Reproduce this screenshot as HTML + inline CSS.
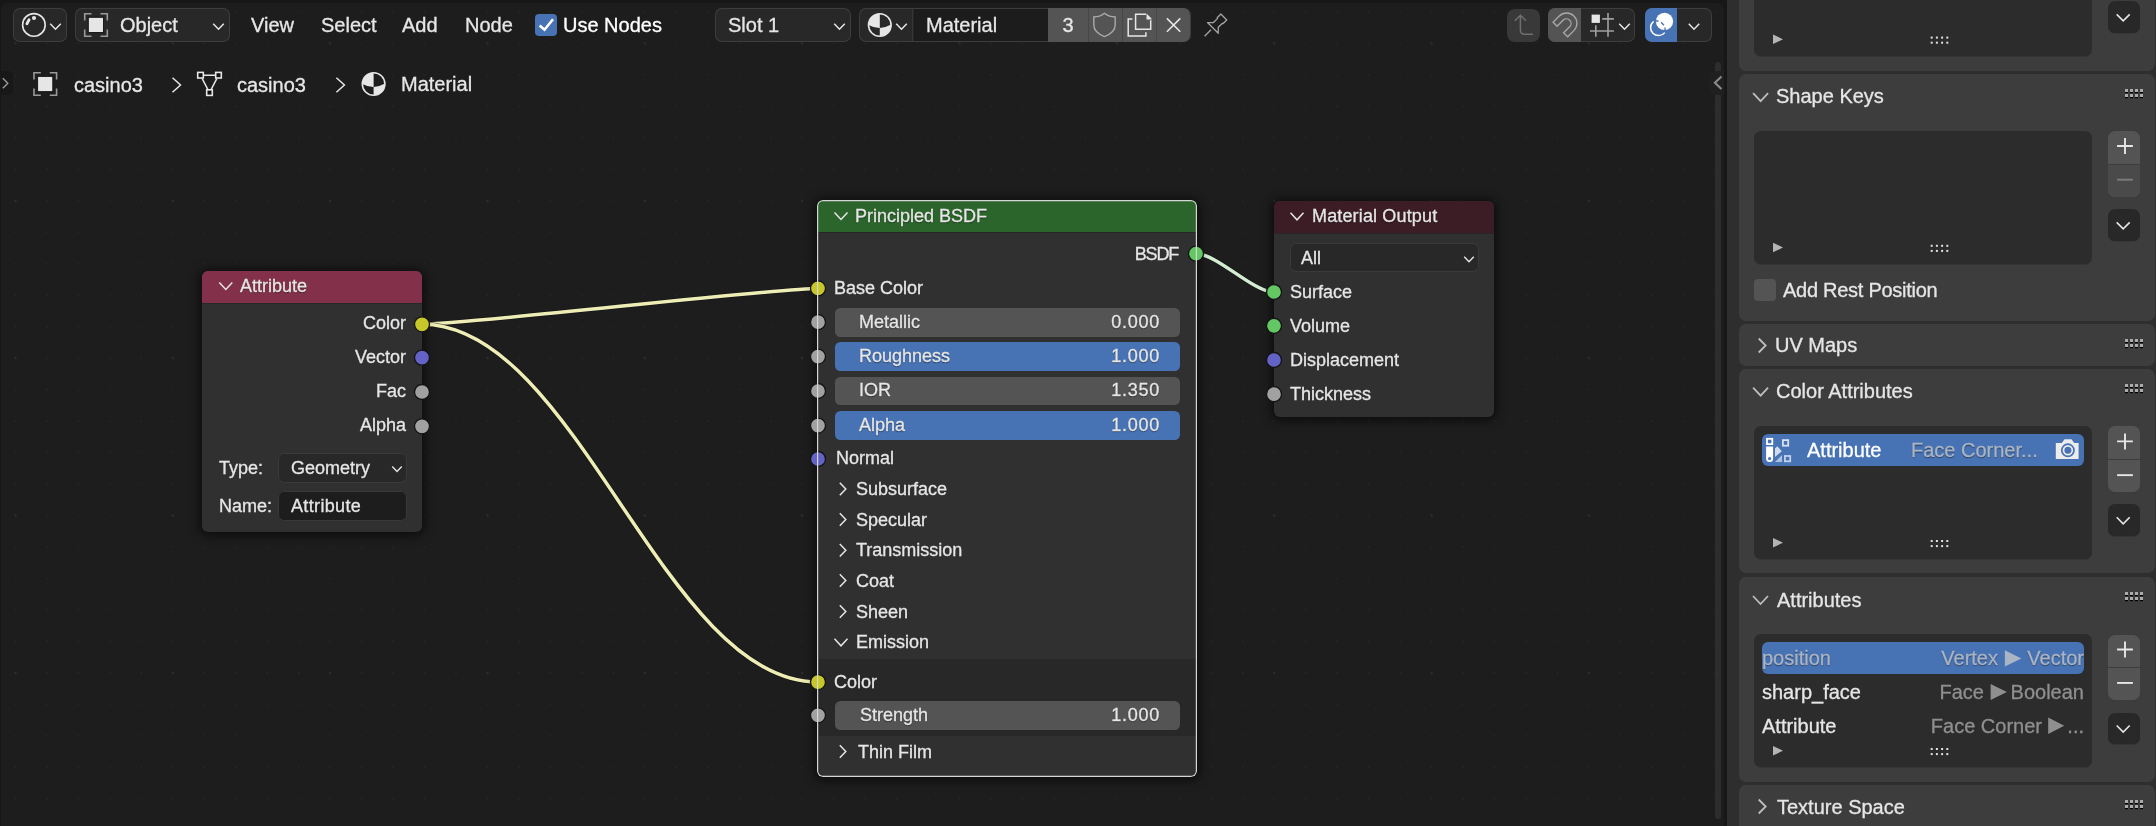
<!DOCTYPE html>
<html><head><meta charset="utf-8"><style>
html,body{margin:0;padding:0;}
body{width:2156px;height:826px;overflow:hidden;position:relative;background:#171717;font-family:"Liberation Sans",sans-serif;}
div{position:absolute;box-sizing:border-box;}
.t{white-space:nowrap;will-change:transform;-webkit-text-stroke:0.3px currentColor;}
svg{position:absolute;left:0;top:0;}
</style></head><body>
<div style="left:0px;top:0px;width:2156px;height:826px;background:#171717;"></div>
<div style="left:1px;top:3px;width:1723px;height:830px;background:#1d1d1d;border-radius:7px 7px 0 0;"></div>
<div style="left:1727px;top:0px;width:1428px;height:826px;background:#2e2e2e;"></div>
<svg width="2156" height="826" viewBox="0 0 2156 826" style="z-index:0"><path d="M14.65 11.2h1.6v1.6h-1.6zM14.65 74.14h1.6v1.6h-1.6zM14.65 105.61h1.6v1.6h-1.6zM14.65 137.08h1.6v1.6h-1.6zM14.65 168.55h1.6v1.6h-1.6zM14.65 231.49h1.6v1.6h-1.6zM14.65 262.96h1.6v1.6h-1.6zM14.65 294.43h1.6v1.6h-1.6zM14.65 325.9h1.6v1.6h-1.6zM14.65 388.84h1.6v1.6h-1.6zM14.65 420.31h1.6v1.6h-1.6zM14.65 451.78h1.6v1.6h-1.6zM14.65 483.25h1.6v1.6h-1.6zM14.65 546.19h1.6v1.6h-1.6zM14.65 577.66h1.6v1.6h-1.6zM14.65 609.13h1.6v1.6h-1.6zM14.65 640.6h1.6v1.6h-1.6zM14.65 703.54h1.6v1.6h-1.6zM14.65 735.01h1.6v1.6h-1.6zM14.65 766.48h1.6v1.6h-1.6zM14.65 797.95h1.6v1.6h-1.6zM46.12 11.2h1.6v1.6h-1.6zM46.12 42.67h1.6v1.6h-1.6zM46.12 74.14h1.6v1.6h-1.6zM46.12 105.61h1.6v1.6h-1.6zM46.12 137.08h1.6v1.6h-1.6zM46.12 168.55h1.6v1.6h-1.6zM46.12 200.02h1.6v1.6h-1.6zM46.12 231.49h1.6v1.6h-1.6zM46.12 262.96h1.6v1.6h-1.6zM46.12 294.43h1.6v1.6h-1.6zM46.12 325.9h1.6v1.6h-1.6zM46.12 357.37h1.6v1.6h-1.6zM46.12 388.84h1.6v1.6h-1.6zM46.12 420.31h1.6v1.6h-1.6zM46.12 451.78h1.6v1.6h-1.6zM46.12 483.25h1.6v1.6h-1.6zM46.12 514.72h1.6v1.6h-1.6zM46.12 546.19h1.6v1.6h-1.6zM46.12 577.66h1.6v1.6h-1.6zM46.12 609.13h1.6v1.6h-1.6zM46.12 640.6h1.6v1.6h-1.6zM46.12 672.07h1.6v1.6h-1.6zM46.12 703.54h1.6v1.6h-1.6zM46.12 735.01h1.6v1.6h-1.6zM46.12 766.48h1.6v1.6h-1.6zM46.12 797.95h1.6v1.6h-1.6zM77.59 11.2h1.6v1.6h-1.6zM77.59 42.67h1.6v1.6h-1.6zM77.59 74.14h1.6v1.6h-1.6zM77.59 105.61h1.6v1.6h-1.6zM77.59 137.08h1.6v1.6h-1.6zM77.59 168.55h1.6v1.6h-1.6zM77.59 200.02h1.6v1.6h-1.6zM77.59 231.49h1.6v1.6h-1.6zM77.59 262.96h1.6v1.6h-1.6zM77.59 294.43h1.6v1.6h-1.6zM77.59 325.9h1.6v1.6h-1.6zM77.59 357.37h1.6v1.6h-1.6zM77.59 388.84h1.6v1.6h-1.6zM77.59 420.31h1.6v1.6h-1.6zM77.59 451.78h1.6v1.6h-1.6zM77.59 483.25h1.6v1.6h-1.6zM77.59 514.72h1.6v1.6h-1.6zM77.59 546.19h1.6v1.6h-1.6zM77.59 577.66h1.6v1.6h-1.6zM77.59 609.13h1.6v1.6h-1.6zM77.59 640.6h1.6v1.6h-1.6zM77.59 672.07h1.6v1.6h-1.6zM77.59 703.54h1.6v1.6h-1.6zM77.59 735.01h1.6v1.6h-1.6zM77.59 766.48h1.6v1.6h-1.6zM77.59 797.95h1.6v1.6h-1.6zM109.06 11.2h1.6v1.6h-1.6zM109.06 42.67h1.6v1.6h-1.6zM109.06 74.14h1.6v1.6h-1.6zM109.06 105.61h1.6v1.6h-1.6zM109.06 137.08h1.6v1.6h-1.6zM109.06 168.55h1.6v1.6h-1.6zM109.06 200.02h1.6v1.6h-1.6zM109.06 231.49h1.6v1.6h-1.6zM109.06 262.96h1.6v1.6h-1.6zM109.06 294.43h1.6v1.6h-1.6zM109.06 325.9h1.6v1.6h-1.6zM109.06 357.37h1.6v1.6h-1.6zM109.06 388.84h1.6v1.6h-1.6zM109.06 420.31h1.6v1.6h-1.6zM109.06 451.78h1.6v1.6h-1.6zM109.06 483.25h1.6v1.6h-1.6zM109.06 514.72h1.6v1.6h-1.6zM109.06 546.19h1.6v1.6h-1.6zM109.06 577.66h1.6v1.6h-1.6zM109.06 609.13h1.6v1.6h-1.6zM109.06 640.6h1.6v1.6h-1.6zM109.06 672.07h1.6v1.6h-1.6zM109.06 703.54h1.6v1.6h-1.6zM109.06 735.01h1.6v1.6h-1.6zM109.06 766.48h1.6v1.6h-1.6zM109.06 797.95h1.6v1.6h-1.6zM140.53 11.2h1.6v1.6h-1.6zM140.53 42.67h1.6v1.6h-1.6zM140.53 74.14h1.6v1.6h-1.6zM140.53 105.61h1.6v1.6h-1.6zM140.53 137.08h1.6v1.6h-1.6zM140.53 168.55h1.6v1.6h-1.6zM140.53 200.02h1.6v1.6h-1.6zM140.53 231.49h1.6v1.6h-1.6zM140.53 262.96h1.6v1.6h-1.6zM140.53 294.43h1.6v1.6h-1.6zM140.53 325.9h1.6v1.6h-1.6zM140.53 357.37h1.6v1.6h-1.6zM140.53 388.84h1.6v1.6h-1.6zM140.53 420.31h1.6v1.6h-1.6zM140.53 451.78h1.6v1.6h-1.6zM140.53 483.25h1.6v1.6h-1.6zM140.53 514.72h1.6v1.6h-1.6zM140.53 546.19h1.6v1.6h-1.6zM140.53 577.66h1.6v1.6h-1.6zM140.53 609.13h1.6v1.6h-1.6zM140.53 640.6h1.6v1.6h-1.6zM140.53 672.07h1.6v1.6h-1.6zM140.53 703.54h1.6v1.6h-1.6zM140.53 735.01h1.6v1.6h-1.6zM140.53 766.48h1.6v1.6h-1.6zM140.53 797.95h1.6v1.6h-1.6zM172 11.2h1.6v1.6h-1.6zM172 74.14h1.6v1.6h-1.6zM172 105.61h1.6v1.6h-1.6zM172 137.08h1.6v1.6h-1.6zM172 168.55h1.6v1.6h-1.6zM172 231.49h1.6v1.6h-1.6zM172 262.96h1.6v1.6h-1.6zM172 294.43h1.6v1.6h-1.6zM172 325.9h1.6v1.6h-1.6zM172 388.84h1.6v1.6h-1.6zM172 420.31h1.6v1.6h-1.6zM172 451.78h1.6v1.6h-1.6zM172 483.25h1.6v1.6h-1.6zM172 546.19h1.6v1.6h-1.6zM172 577.66h1.6v1.6h-1.6zM172 609.13h1.6v1.6h-1.6zM172 640.6h1.6v1.6h-1.6zM172 703.54h1.6v1.6h-1.6zM172 735.01h1.6v1.6h-1.6zM172 766.48h1.6v1.6h-1.6zM172 797.95h1.6v1.6h-1.6zM203.47 11.2h1.6v1.6h-1.6zM203.47 42.67h1.6v1.6h-1.6zM203.47 74.14h1.6v1.6h-1.6zM203.47 105.61h1.6v1.6h-1.6zM203.47 137.08h1.6v1.6h-1.6zM203.47 168.55h1.6v1.6h-1.6zM203.47 200.02h1.6v1.6h-1.6zM203.47 231.49h1.6v1.6h-1.6zM203.47 262.96h1.6v1.6h-1.6zM203.47 294.43h1.6v1.6h-1.6zM203.47 325.9h1.6v1.6h-1.6zM203.47 357.37h1.6v1.6h-1.6zM203.47 388.84h1.6v1.6h-1.6zM203.47 420.31h1.6v1.6h-1.6zM203.47 451.78h1.6v1.6h-1.6zM203.47 483.25h1.6v1.6h-1.6zM203.47 514.72h1.6v1.6h-1.6zM203.47 546.19h1.6v1.6h-1.6zM203.47 577.66h1.6v1.6h-1.6zM203.47 609.13h1.6v1.6h-1.6zM203.47 640.6h1.6v1.6h-1.6zM203.47 672.07h1.6v1.6h-1.6zM203.47 703.54h1.6v1.6h-1.6zM203.47 735.01h1.6v1.6h-1.6zM203.47 766.48h1.6v1.6h-1.6zM203.47 797.95h1.6v1.6h-1.6zM234.94 11.2h1.6v1.6h-1.6zM234.94 42.67h1.6v1.6h-1.6zM234.94 74.14h1.6v1.6h-1.6zM234.94 105.61h1.6v1.6h-1.6zM234.94 137.08h1.6v1.6h-1.6zM234.94 168.55h1.6v1.6h-1.6zM234.94 200.02h1.6v1.6h-1.6zM234.94 231.49h1.6v1.6h-1.6zM234.94 262.96h1.6v1.6h-1.6zM234.94 294.43h1.6v1.6h-1.6zM234.94 325.9h1.6v1.6h-1.6zM234.94 357.37h1.6v1.6h-1.6zM234.94 388.84h1.6v1.6h-1.6zM234.94 420.31h1.6v1.6h-1.6zM234.94 451.78h1.6v1.6h-1.6zM234.94 483.25h1.6v1.6h-1.6zM234.94 514.72h1.6v1.6h-1.6zM234.94 546.19h1.6v1.6h-1.6zM234.94 577.66h1.6v1.6h-1.6zM234.94 609.13h1.6v1.6h-1.6zM234.94 640.6h1.6v1.6h-1.6zM234.94 672.07h1.6v1.6h-1.6zM234.94 703.54h1.6v1.6h-1.6zM234.94 735.01h1.6v1.6h-1.6zM234.94 766.48h1.6v1.6h-1.6zM234.94 797.95h1.6v1.6h-1.6zM266.41 11.2h1.6v1.6h-1.6zM266.41 42.67h1.6v1.6h-1.6zM266.41 74.14h1.6v1.6h-1.6zM266.41 105.61h1.6v1.6h-1.6zM266.41 137.08h1.6v1.6h-1.6zM266.41 168.55h1.6v1.6h-1.6zM266.41 200.02h1.6v1.6h-1.6zM266.41 231.49h1.6v1.6h-1.6zM266.41 262.96h1.6v1.6h-1.6zM266.41 294.43h1.6v1.6h-1.6zM266.41 325.9h1.6v1.6h-1.6zM266.41 357.37h1.6v1.6h-1.6zM266.41 388.84h1.6v1.6h-1.6zM266.41 420.31h1.6v1.6h-1.6zM266.41 451.78h1.6v1.6h-1.6zM266.41 483.25h1.6v1.6h-1.6zM266.41 514.72h1.6v1.6h-1.6zM266.41 546.19h1.6v1.6h-1.6zM266.41 577.66h1.6v1.6h-1.6zM266.41 609.13h1.6v1.6h-1.6zM266.41 640.6h1.6v1.6h-1.6zM266.41 672.07h1.6v1.6h-1.6zM266.41 703.54h1.6v1.6h-1.6zM266.41 735.01h1.6v1.6h-1.6zM266.41 766.48h1.6v1.6h-1.6zM266.41 797.95h1.6v1.6h-1.6zM297.88 11.2h1.6v1.6h-1.6zM297.88 42.67h1.6v1.6h-1.6zM297.88 74.14h1.6v1.6h-1.6zM297.88 105.61h1.6v1.6h-1.6zM297.88 137.08h1.6v1.6h-1.6zM297.88 168.55h1.6v1.6h-1.6zM297.88 200.02h1.6v1.6h-1.6zM297.88 231.49h1.6v1.6h-1.6zM297.88 262.96h1.6v1.6h-1.6zM297.88 294.43h1.6v1.6h-1.6zM297.88 325.9h1.6v1.6h-1.6zM297.88 357.37h1.6v1.6h-1.6zM297.88 388.84h1.6v1.6h-1.6zM297.88 420.31h1.6v1.6h-1.6zM297.88 451.78h1.6v1.6h-1.6zM297.88 483.25h1.6v1.6h-1.6zM297.88 514.72h1.6v1.6h-1.6zM297.88 546.19h1.6v1.6h-1.6zM297.88 577.66h1.6v1.6h-1.6zM297.88 609.13h1.6v1.6h-1.6zM297.88 640.6h1.6v1.6h-1.6zM297.88 672.07h1.6v1.6h-1.6zM297.88 703.54h1.6v1.6h-1.6zM297.88 735.01h1.6v1.6h-1.6zM297.88 766.48h1.6v1.6h-1.6zM297.88 797.95h1.6v1.6h-1.6zM329.35 11.2h1.6v1.6h-1.6zM329.35 74.14h1.6v1.6h-1.6zM329.35 105.61h1.6v1.6h-1.6zM329.35 137.08h1.6v1.6h-1.6zM329.35 168.55h1.6v1.6h-1.6zM329.35 231.49h1.6v1.6h-1.6zM329.35 262.96h1.6v1.6h-1.6zM329.35 294.43h1.6v1.6h-1.6zM329.35 325.9h1.6v1.6h-1.6zM329.35 388.84h1.6v1.6h-1.6zM329.35 420.31h1.6v1.6h-1.6zM329.35 451.78h1.6v1.6h-1.6zM329.35 483.25h1.6v1.6h-1.6zM329.35 546.19h1.6v1.6h-1.6zM329.35 577.66h1.6v1.6h-1.6zM329.35 609.13h1.6v1.6h-1.6zM329.35 640.6h1.6v1.6h-1.6zM329.35 703.54h1.6v1.6h-1.6zM329.35 735.01h1.6v1.6h-1.6zM329.35 766.48h1.6v1.6h-1.6zM329.35 797.95h1.6v1.6h-1.6zM360.82 11.2h1.6v1.6h-1.6zM360.82 42.67h1.6v1.6h-1.6zM360.82 74.14h1.6v1.6h-1.6zM360.82 105.61h1.6v1.6h-1.6zM360.82 137.08h1.6v1.6h-1.6zM360.82 168.55h1.6v1.6h-1.6zM360.82 200.02h1.6v1.6h-1.6zM360.82 231.49h1.6v1.6h-1.6zM360.82 262.96h1.6v1.6h-1.6zM360.82 294.43h1.6v1.6h-1.6zM360.82 325.9h1.6v1.6h-1.6zM360.82 357.37h1.6v1.6h-1.6zM360.82 388.84h1.6v1.6h-1.6zM360.82 420.31h1.6v1.6h-1.6zM360.82 451.78h1.6v1.6h-1.6zM360.82 483.25h1.6v1.6h-1.6zM360.82 514.72h1.6v1.6h-1.6zM360.82 546.19h1.6v1.6h-1.6zM360.82 577.66h1.6v1.6h-1.6zM360.82 609.13h1.6v1.6h-1.6zM360.82 640.6h1.6v1.6h-1.6zM360.82 672.07h1.6v1.6h-1.6zM360.82 703.54h1.6v1.6h-1.6zM360.82 735.01h1.6v1.6h-1.6zM360.82 766.48h1.6v1.6h-1.6zM360.82 797.95h1.6v1.6h-1.6zM392.29 11.2h1.6v1.6h-1.6zM392.29 42.67h1.6v1.6h-1.6zM392.29 74.14h1.6v1.6h-1.6zM392.29 105.61h1.6v1.6h-1.6zM392.29 137.08h1.6v1.6h-1.6zM392.29 168.55h1.6v1.6h-1.6zM392.29 200.02h1.6v1.6h-1.6zM392.29 231.49h1.6v1.6h-1.6zM392.29 262.96h1.6v1.6h-1.6zM392.29 294.43h1.6v1.6h-1.6zM392.29 325.9h1.6v1.6h-1.6zM392.29 357.37h1.6v1.6h-1.6zM392.29 388.84h1.6v1.6h-1.6zM392.29 420.31h1.6v1.6h-1.6zM392.29 451.78h1.6v1.6h-1.6zM392.29 483.25h1.6v1.6h-1.6zM392.29 514.72h1.6v1.6h-1.6zM392.29 546.19h1.6v1.6h-1.6zM392.29 577.66h1.6v1.6h-1.6zM392.29 609.13h1.6v1.6h-1.6zM392.29 640.6h1.6v1.6h-1.6zM392.29 672.07h1.6v1.6h-1.6zM392.29 703.54h1.6v1.6h-1.6zM392.29 735.01h1.6v1.6h-1.6zM392.29 766.48h1.6v1.6h-1.6zM392.29 797.95h1.6v1.6h-1.6zM423.76 11.2h1.6v1.6h-1.6zM423.76 42.67h1.6v1.6h-1.6zM423.76 74.14h1.6v1.6h-1.6zM423.76 105.61h1.6v1.6h-1.6zM423.76 137.08h1.6v1.6h-1.6zM423.76 168.55h1.6v1.6h-1.6zM423.76 200.02h1.6v1.6h-1.6zM423.76 231.49h1.6v1.6h-1.6zM423.76 262.96h1.6v1.6h-1.6zM423.76 294.43h1.6v1.6h-1.6zM423.76 325.9h1.6v1.6h-1.6zM423.76 357.37h1.6v1.6h-1.6zM423.76 388.84h1.6v1.6h-1.6zM423.76 420.31h1.6v1.6h-1.6zM423.76 451.78h1.6v1.6h-1.6zM423.76 483.25h1.6v1.6h-1.6zM423.76 514.72h1.6v1.6h-1.6zM423.76 546.19h1.6v1.6h-1.6zM423.76 577.66h1.6v1.6h-1.6zM423.76 609.13h1.6v1.6h-1.6zM423.76 640.6h1.6v1.6h-1.6zM423.76 672.07h1.6v1.6h-1.6zM423.76 703.54h1.6v1.6h-1.6zM423.76 735.01h1.6v1.6h-1.6zM423.76 766.48h1.6v1.6h-1.6zM423.76 797.95h1.6v1.6h-1.6zM455.23 11.2h1.6v1.6h-1.6zM455.23 42.67h1.6v1.6h-1.6zM455.23 74.14h1.6v1.6h-1.6zM455.23 105.61h1.6v1.6h-1.6zM455.23 137.08h1.6v1.6h-1.6zM455.23 168.55h1.6v1.6h-1.6zM455.23 200.02h1.6v1.6h-1.6zM455.23 231.49h1.6v1.6h-1.6zM455.23 262.96h1.6v1.6h-1.6zM455.23 294.43h1.6v1.6h-1.6zM455.23 325.9h1.6v1.6h-1.6zM455.23 357.37h1.6v1.6h-1.6zM455.23 388.84h1.6v1.6h-1.6zM455.23 420.31h1.6v1.6h-1.6zM455.23 451.78h1.6v1.6h-1.6zM455.23 483.25h1.6v1.6h-1.6zM455.23 514.72h1.6v1.6h-1.6zM455.23 546.19h1.6v1.6h-1.6zM455.23 577.66h1.6v1.6h-1.6zM455.23 609.13h1.6v1.6h-1.6zM455.23 640.6h1.6v1.6h-1.6zM455.23 672.07h1.6v1.6h-1.6zM455.23 703.54h1.6v1.6h-1.6zM455.23 735.01h1.6v1.6h-1.6zM455.23 766.48h1.6v1.6h-1.6zM455.23 797.95h1.6v1.6h-1.6zM486.7 11.2h1.6v1.6h-1.6zM486.7 74.14h1.6v1.6h-1.6zM486.7 105.61h1.6v1.6h-1.6zM486.7 137.08h1.6v1.6h-1.6zM486.7 168.55h1.6v1.6h-1.6zM486.7 231.49h1.6v1.6h-1.6zM486.7 262.96h1.6v1.6h-1.6zM486.7 294.43h1.6v1.6h-1.6zM486.7 325.9h1.6v1.6h-1.6zM486.7 388.84h1.6v1.6h-1.6zM486.7 420.31h1.6v1.6h-1.6zM486.7 451.78h1.6v1.6h-1.6zM486.7 483.25h1.6v1.6h-1.6zM486.7 546.19h1.6v1.6h-1.6zM486.7 577.66h1.6v1.6h-1.6zM486.7 609.13h1.6v1.6h-1.6zM486.7 640.6h1.6v1.6h-1.6zM486.7 703.54h1.6v1.6h-1.6zM486.7 735.01h1.6v1.6h-1.6zM486.7 766.48h1.6v1.6h-1.6zM486.7 797.95h1.6v1.6h-1.6zM518.17 11.2h1.6v1.6h-1.6zM518.17 42.67h1.6v1.6h-1.6zM518.17 74.14h1.6v1.6h-1.6zM518.17 105.61h1.6v1.6h-1.6zM518.17 137.08h1.6v1.6h-1.6zM518.17 168.55h1.6v1.6h-1.6zM518.17 200.02h1.6v1.6h-1.6zM518.17 231.49h1.6v1.6h-1.6zM518.17 262.96h1.6v1.6h-1.6zM518.17 294.43h1.6v1.6h-1.6zM518.17 325.9h1.6v1.6h-1.6zM518.17 357.37h1.6v1.6h-1.6zM518.17 388.84h1.6v1.6h-1.6zM518.17 420.31h1.6v1.6h-1.6zM518.17 451.78h1.6v1.6h-1.6zM518.17 483.25h1.6v1.6h-1.6zM518.17 514.72h1.6v1.6h-1.6zM518.17 546.19h1.6v1.6h-1.6zM518.17 577.66h1.6v1.6h-1.6zM518.17 609.13h1.6v1.6h-1.6zM518.17 640.6h1.6v1.6h-1.6zM518.17 672.07h1.6v1.6h-1.6zM518.17 703.54h1.6v1.6h-1.6zM518.17 735.01h1.6v1.6h-1.6zM518.17 766.48h1.6v1.6h-1.6zM518.17 797.95h1.6v1.6h-1.6zM549.64 11.2h1.6v1.6h-1.6zM549.64 42.67h1.6v1.6h-1.6zM549.64 74.14h1.6v1.6h-1.6zM549.64 105.61h1.6v1.6h-1.6zM549.64 137.08h1.6v1.6h-1.6zM549.64 168.55h1.6v1.6h-1.6zM549.64 200.02h1.6v1.6h-1.6zM549.64 231.49h1.6v1.6h-1.6zM549.64 262.96h1.6v1.6h-1.6zM549.64 294.43h1.6v1.6h-1.6zM549.64 325.9h1.6v1.6h-1.6zM549.64 357.37h1.6v1.6h-1.6zM549.64 388.84h1.6v1.6h-1.6zM549.64 420.31h1.6v1.6h-1.6zM549.64 451.78h1.6v1.6h-1.6zM549.64 483.25h1.6v1.6h-1.6zM549.64 514.72h1.6v1.6h-1.6zM549.64 546.19h1.6v1.6h-1.6zM549.64 577.66h1.6v1.6h-1.6zM549.64 609.13h1.6v1.6h-1.6zM549.64 640.6h1.6v1.6h-1.6zM549.64 672.07h1.6v1.6h-1.6zM549.64 703.54h1.6v1.6h-1.6zM549.64 735.01h1.6v1.6h-1.6zM549.64 766.48h1.6v1.6h-1.6zM549.64 797.95h1.6v1.6h-1.6zM581.11 11.2h1.6v1.6h-1.6zM581.11 42.67h1.6v1.6h-1.6zM581.11 74.14h1.6v1.6h-1.6zM581.11 105.61h1.6v1.6h-1.6zM581.11 137.08h1.6v1.6h-1.6zM581.11 168.55h1.6v1.6h-1.6zM581.11 200.02h1.6v1.6h-1.6zM581.11 231.49h1.6v1.6h-1.6zM581.11 262.96h1.6v1.6h-1.6zM581.11 294.43h1.6v1.6h-1.6zM581.11 325.9h1.6v1.6h-1.6zM581.11 357.37h1.6v1.6h-1.6zM581.11 388.84h1.6v1.6h-1.6zM581.11 420.31h1.6v1.6h-1.6zM581.11 451.78h1.6v1.6h-1.6zM581.11 483.25h1.6v1.6h-1.6zM581.11 514.72h1.6v1.6h-1.6zM581.11 546.19h1.6v1.6h-1.6zM581.11 577.66h1.6v1.6h-1.6zM581.11 609.13h1.6v1.6h-1.6zM581.11 640.6h1.6v1.6h-1.6zM581.11 672.07h1.6v1.6h-1.6zM581.11 703.54h1.6v1.6h-1.6zM581.11 735.01h1.6v1.6h-1.6zM581.11 766.48h1.6v1.6h-1.6zM581.11 797.95h1.6v1.6h-1.6zM612.58 11.2h1.6v1.6h-1.6zM612.58 42.67h1.6v1.6h-1.6zM612.58 74.14h1.6v1.6h-1.6zM612.58 105.61h1.6v1.6h-1.6zM612.58 137.08h1.6v1.6h-1.6zM612.58 168.55h1.6v1.6h-1.6zM612.58 200.02h1.6v1.6h-1.6zM612.58 231.49h1.6v1.6h-1.6zM612.58 262.96h1.6v1.6h-1.6zM612.58 294.43h1.6v1.6h-1.6zM612.58 325.9h1.6v1.6h-1.6zM612.58 357.37h1.6v1.6h-1.6zM612.58 388.84h1.6v1.6h-1.6zM612.58 420.31h1.6v1.6h-1.6zM612.58 451.78h1.6v1.6h-1.6zM612.58 483.25h1.6v1.6h-1.6zM612.58 514.72h1.6v1.6h-1.6zM612.58 546.19h1.6v1.6h-1.6zM612.58 577.66h1.6v1.6h-1.6zM612.58 609.13h1.6v1.6h-1.6zM612.58 640.6h1.6v1.6h-1.6zM612.58 672.07h1.6v1.6h-1.6zM612.58 703.54h1.6v1.6h-1.6zM612.58 735.01h1.6v1.6h-1.6zM612.58 766.48h1.6v1.6h-1.6zM612.58 797.95h1.6v1.6h-1.6zM644.05 11.2h1.6v1.6h-1.6zM644.05 74.14h1.6v1.6h-1.6zM644.05 105.61h1.6v1.6h-1.6zM644.05 137.08h1.6v1.6h-1.6zM644.05 168.55h1.6v1.6h-1.6zM644.05 231.49h1.6v1.6h-1.6zM644.05 262.96h1.6v1.6h-1.6zM644.05 294.43h1.6v1.6h-1.6zM644.05 325.9h1.6v1.6h-1.6zM644.05 388.84h1.6v1.6h-1.6zM644.05 420.31h1.6v1.6h-1.6zM644.05 451.78h1.6v1.6h-1.6zM644.05 483.25h1.6v1.6h-1.6zM644.05 546.19h1.6v1.6h-1.6zM644.05 577.66h1.6v1.6h-1.6zM644.05 609.13h1.6v1.6h-1.6zM644.05 640.6h1.6v1.6h-1.6zM644.05 703.54h1.6v1.6h-1.6zM644.05 735.01h1.6v1.6h-1.6zM644.05 766.48h1.6v1.6h-1.6zM644.05 797.95h1.6v1.6h-1.6zM675.52 11.2h1.6v1.6h-1.6zM675.52 42.67h1.6v1.6h-1.6zM675.52 74.14h1.6v1.6h-1.6zM675.52 105.61h1.6v1.6h-1.6zM675.52 137.08h1.6v1.6h-1.6zM675.52 168.55h1.6v1.6h-1.6zM675.52 200.02h1.6v1.6h-1.6zM675.52 231.49h1.6v1.6h-1.6zM675.52 262.96h1.6v1.6h-1.6zM675.52 294.43h1.6v1.6h-1.6zM675.52 325.9h1.6v1.6h-1.6zM675.52 357.37h1.6v1.6h-1.6zM675.52 388.84h1.6v1.6h-1.6zM675.52 420.31h1.6v1.6h-1.6zM675.52 451.78h1.6v1.6h-1.6zM675.52 483.25h1.6v1.6h-1.6zM675.52 514.72h1.6v1.6h-1.6zM675.52 546.19h1.6v1.6h-1.6zM675.52 577.66h1.6v1.6h-1.6zM675.52 609.13h1.6v1.6h-1.6zM675.52 640.6h1.6v1.6h-1.6zM675.52 672.07h1.6v1.6h-1.6zM675.52 703.54h1.6v1.6h-1.6zM675.52 735.01h1.6v1.6h-1.6zM675.52 766.48h1.6v1.6h-1.6zM675.52 797.95h1.6v1.6h-1.6zM706.99 11.2h1.6v1.6h-1.6zM706.99 42.67h1.6v1.6h-1.6zM706.99 74.14h1.6v1.6h-1.6zM706.99 105.61h1.6v1.6h-1.6zM706.99 137.08h1.6v1.6h-1.6zM706.99 168.55h1.6v1.6h-1.6zM706.99 200.02h1.6v1.6h-1.6zM706.99 231.49h1.6v1.6h-1.6zM706.99 262.96h1.6v1.6h-1.6zM706.99 294.43h1.6v1.6h-1.6zM706.99 325.9h1.6v1.6h-1.6zM706.99 357.37h1.6v1.6h-1.6zM706.99 388.84h1.6v1.6h-1.6zM706.99 420.31h1.6v1.6h-1.6zM706.99 451.78h1.6v1.6h-1.6zM706.99 483.25h1.6v1.6h-1.6zM706.99 514.72h1.6v1.6h-1.6zM706.99 546.19h1.6v1.6h-1.6zM706.99 577.66h1.6v1.6h-1.6zM706.99 609.13h1.6v1.6h-1.6zM706.99 640.6h1.6v1.6h-1.6zM706.99 672.07h1.6v1.6h-1.6zM706.99 703.54h1.6v1.6h-1.6zM706.99 735.01h1.6v1.6h-1.6zM706.99 766.48h1.6v1.6h-1.6zM706.99 797.95h1.6v1.6h-1.6zM738.46 11.2h1.6v1.6h-1.6zM738.46 42.67h1.6v1.6h-1.6zM738.46 74.14h1.6v1.6h-1.6zM738.46 105.61h1.6v1.6h-1.6zM738.46 137.08h1.6v1.6h-1.6zM738.46 168.55h1.6v1.6h-1.6zM738.46 200.02h1.6v1.6h-1.6zM738.46 231.49h1.6v1.6h-1.6zM738.46 262.96h1.6v1.6h-1.6zM738.46 294.43h1.6v1.6h-1.6zM738.46 325.9h1.6v1.6h-1.6zM738.46 357.37h1.6v1.6h-1.6zM738.46 388.84h1.6v1.6h-1.6zM738.46 420.31h1.6v1.6h-1.6zM738.46 451.78h1.6v1.6h-1.6zM738.46 483.25h1.6v1.6h-1.6zM738.46 514.72h1.6v1.6h-1.6zM738.46 546.19h1.6v1.6h-1.6zM738.46 577.66h1.6v1.6h-1.6zM738.46 609.13h1.6v1.6h-1.6zM738.46 640.6h1.6v1.6h-1.6zM738.46 672.07h1.6v1.6h-1.6zM738.46 703.54h1.6v1.6h-1.6zM738.46 735.01h1.6v1.6h-1.6zM738.46 766.48h1.6v1.6h-1.6zM738.46 797.95h1.6v1.6h-1.6zM769.93 11.2h1.6v1.6h-1.6zM769.93 42.67h1.6v1.6h-1.6zM769.93 74.14h1.6v1.6h-1.6zM769.93 105.61h1.6v1.6h-1.6zM769.93 137.08h1.6v1.6h-1.6zM769.93 168.55h1.6v1.6h-1.6zM769.93 200.02h1.6v1.6h-1.6zM769.93 231.49h1.6v1.6h-1.6zM769.93 262.96h1.6v1.6h-1.6zM769.93 294.43h1.6v1.6h-1.6zM769.93 325.9h1.6v1.6h-1.6zM769.93 357.37h1.6v1.6h-1.6zM769.93 388.84h1.6v1.6h-1.6zM769.93 420.31h1.6v1.6h-1.6zM769.93 451.78h1.6v1.6h-1.6zM769.93 483.25h1.6v1.6h-1.6zM769.93 514.72h1.6v1.6h-1.6zM769.93 546.19h1.6v1.6h-1.6zM769.93 577.66h1.6v1.6h-1.6zM769.93 609.13h1.6v1.6h-1.6zM769.93 640.6h1.6v1.6h-1.6zM769.93 672.07h1.6v1.6h-1.6zM769.93 703.54h1.6v1.6h-1.6zM769.93 735.01h1.6v1.6h-1.6zM769.93 766.48h1.6v1.6h-1.6zM769.93 797.95h1.6v1.6h-1.6zM801.4 11.2h1.6v1.6h-1.6zM801.4 74.14h1.6v1.6h-1.6zM801.4 105.61h1.6v1.6h-1.6zM801.4 137.08h1.6v1.6h-1.6zM801.4 168.55h1.6v1.6h-1.6zM801.4 231.49h1.6v1.6h-1.6zM801.4 262.96h1.6v1.6h-1.6zM801.4 294.43h1.6v1.6h-1.6zM801.4 325.9h1.6v1.6h-1.6zM801.4 388.84h1.6v1.6h-1.6zM801.4 420.31h1.6v1.6h-1.6zM801.4 451.78h1.6v1.6h-1.6zM801.4 483.25h1.6v1.6h-1.6zM801.4 546.19h1.6v1.6h-1.6zM801.4 577.66h1.6v1.6h-1.6zM801.4 609.13h1.6v1.6h-1.6zM801.4 640.6h1.6v1.6h-1.6zM801.4 703.54h1.6v1.6h-1.6zM801.4 735.01h1.6v1.6h-1.6zM801.4 766.48h1.6v1.6h-1.6zM801.4 797.95h1.6v1.6h-1.6zM832.87 11.2h1.6v1.6h-1.6zM832.87 42.67h1.6v1.6h-1.6zM832.87 74.14h1.6v1.6h-1.6zM832.87 105.61h1.6v1.6h-1.6zM832.87 137.08h1.6v1.6h-1.6zM832.87 168.55h1.6v1.6h-1.6zM832.87 200.02h1.6v1.6h-1.6zM832.87 231.49h1.6v1.6h-1.6zM832.87 262.96h1.6v1.6h-1.6zM832.87 294.43h1.6v1.6h-1.6zM832.87 325.9h1.6v1.6h-1.6zM832.87 357.37h1.6v1.6h-1.6zM832.87 388.84h1.6v1.6h-1.6zM832.87 420.31h1.6v1.6h-1.6zM832.87 451.78h1.6v1.6h-1.6zM832.87 483.25h1.6v1.6h-1.6zM832.87 514.72h1.6v1.6h-1.6zM832.87 546.19h1.6v1.6h-1.6zM832.87 577.66h1.6v1.6h-1.6zM832.87 609.13h1.6v1.6h-1.6zM832.87 640.6h1.6v1.6h-1.6zM832.87 672.07h1.6v1.6h-1.6zM832.87 703.54h1.6v1.6h-1.6zM832.87 735.01h1.6v1.6h-1.6zM832.87 766.48h1.6v1.6h-1.6zM832.87 797.95h1.6v1.6h-1.6zM864.34 11.2h1.6v1.6h-1.6zM864.34 42.67h1.6v1.6h-1.6zM864.34 74.14h1.6v1.6h-1.6zM864.34 105.61h1.6v1.6h-1.6zM864.34 137.08h1.6v1.6h-1.6zM864.34 168.55h1.6v1.6h-1.6zM864.34 200.02h1.6v1.6h-1.6zM864.34 231.49h1.6v1.6h-1.6zM864.34 262.96h1.6v1.6h-1.6zM864.34 294.43h1.6v1.6h-1.6zM864.34 325.9h1.6v1.6h-1.6zM864.34 357.37h1.6v1.6h-1.6zM864.34 388.84h1.6v1.6h-1.6zM864.34 420.31h1.6v1.6h-1.6zM864.34 451.78h1.6v1.6h-1.6zM864.34 483.25h1.6v1.6h-1.6zM864.34 514.72h1.6v1.6h-1.6zM864.34 546.19h1.6v1.6h-1.6zM864.34 577.66h1.6v1.6h-1.6zM864.34 609.13h1.6v1.6h-1.6zM864.34 640.6h1.6v1.6h-1.6zM864.34 672.07h1.6v1.6h-1.6zM864.34 703.54h1.6v1.6h-1.6zM864.34 735.01h1.6v1.6h-1.6zM864.34 766.48h1.6v1.6h-1.6zM864.34 797.95h1.6v1.6h-1.6zM895.81 11.2h1.6v1.6h-1.6zM895.81 42.67h1.6v1.6h-1.6zM895.81 74.14h1.6v1.6h-1.6zM895.81 105.61h1.6v1.6h-1.6zM895.81 137.08h1.6v1.6h-1.6zM895.81 168.55h1.6v1.6h-1.6zM895.81 200.02h1.6v1.6h-1.6zM895.81 231.49h1.6v1.6h-1.6zM895.81 262.96h1.6v1.6h-1.6zM895.81 294.43h1.6v1.6h-1.6zM895.81 325.9h1.6v1.6h-1.6zM895.81 357.37h1.6v1.6h-1.6zM895.81 388.84h1.6v1.6h-1.6zM895.81 420.31h1.6v1.6h-1.6zM895.81 451.78h1.6v1.6h-1.6zM895.81 483.25h1.6v1.6h-1.6zM895.81 514.72h1.6v1.6h-1.6zM895.81 546.19h1.6v1.6h-1.6zM895.81 577.66h1.6v1.6h-1.6zM895.81 609.13h1.6v1.6h-1.6zM895.81 640.6h1.6v1.6h-1.6zM895.81 672.07h1.6v1.6h-1.6zM895.81 703.54h1.6v1.6h-1.6zM895.81 735.01h1.6v1.6h-1.6zM895.81 766.48h1.6v1.6h-1.6zM895.81 797.95h1.6v1.6h-1.6zM927.28 11.2h1.6v1.6h-1.6zM927.28 42.67h1.6v1.6h-1.6zM927.28 74.14h1.6v1.6h-1.6zM927.28 105.61h1.6v1.6h-1.6zM927.28 137.08h1.6v1.6h-1.6zM927.28 168.55h1.6v1.6h-1.6zM927.28 200.02h1.6v1.6h-1.6zM927.28 231.49h1.6v1.6h-1.6zM927.28 262.96h1.6v1.6h-1.6zM927.28 294.43h1.6v1.6h-1.6zM927.28 325.9h1.6v1.6h-1.6zM927.28 357.37h1.6v1.6h-1.6zM927.28 388.84h1.6v1.6h-1.6zM927.28 420.31h1.6v1.6h-1.6zM927.28 451.78h1.6v1.6h-1.6zM927.28 483.25h1.6v1.6h-1.6zM927.28 514.72h1.6v1.6h-1.6zM927.28 546.19h1.6v1.6h-1.6zM927.28 577.66h1.6v1.6h-1.6zM927.28 609.13h1.6v1.6h-1.6zM927.28 640.6h1.6v1.6h-1.6zM927.28 672.07h1.6v1.6h-1.6zM927.28 703.54h1.6v1.6h-1.6zM927.28 735.01h1.6v1.6h-1.6zM927.28 766.48h1.6v1.6h-1.6zM927.28 797.95h1.6v1.6h-1.6zM958.75 11.2h1.6v1.6h-1.6zM958.75 74.14h1.6v1.6h-1.6zM958.75 105.61h1.6v1.6h-1.6zM958.75 137.08h1.6v1.6h-1.6zM958.75 168.55h1.6v1.6h-1.6zM958.75 231.49h1.6v1.6h-1.6zM958.75 262.96h1.6v1.6h-1.6zM958.75 294.43h1.6v1.6h-1.6zM958.75 325.9h1.6v1.6h-1.6zM958.75 388.84h1.6v1.6h-1.6zM958.75 420.31h1.6v1.6h-1.6zM958.75 451.78h1.6v1.6h-1.6zM958.75 483.25h1.6v1.6h-1.6zM958.75 546.19h1.6v1.6h-1.6zM958.75 577.66h1.6v1.6h-1.6zM958.75 609.13h1.6v1.6h-1.6zM958.75 640.6h1.6v1.6h-1.6zM958.75 703.54h1.6v1.6h-1.6zM958.75 735.01h1.6v1.6h-1.6zM958.75 766.48h1.6v1.6h-1.6zM958.75 797.95h1.6v1.6h-1.6zM990.22 11.2h1.6v1.6h-1.6zM990.22 42.67h1.6v1.6h-1.6zM990.22 74.14h1.6v1.6h-1.6zM990.22 105.61h1.6v1.6h-1.6zM990.22 137.08h1.6v1.6h-1.6zM990.22 168.55h1.6v1.6h-1.6zM990.22 200.02h1.6v1.6h-1.6zM990.22 231.49h1.6v1.6h-1.6zM990.22 262.96h1.6v1.6h-1.6zM990.22 294.43h1.6v1.6h-1.6zM990.22 325.9h1.6v1.6h-1.6zM990.22 357.37h1.6v1.6h-1.6zM990.22 388.84h1.6v1.6h-1.6zM990.22 420.31h1.6v1.6h-1.6zM990.22 451.78h1.6v1.6h-1.6zM990.22 483.25h1.6v1.6h-1.6zM990.22 514.72h1.6v1.6h-1.6zM990.22 546.19h1.6v1.6h-1.6zM990.22 577.66h1.6v1.6h-1.6zM990.22 609.13h1.6v1.6h-1.6zM990.22 640.6h1.6v1.6h-1.6zM990.22 672.07h1.6v1.6h-1.6zM990.22 703.54h1.6v1.6h-1.6zM990.22 735.01h1.6v1.6h-1.6zM990.22 766.48h1.6v1.6h-1.6zM990.22 797.95h1.6v1.6h-1.6zM1021.69 11.2h1.6v1.6h-1.6zM1021.69 42.67h1.6v1.6h-1.6zM1021.69 74.14h1.6v1.6h-1.6zM1021.69 105.61h1.6v1.6h-1.6zM1021.69 137.08h1.6v1.6h-1.6zM1021.69 168.55h1.6v1.6h-1.6zM1021.69 200.02h1.6v1.6h-1.6zM1021.69 231.49h1.6v1.6h-1.6zM1021.69 262.96h1.6v1.6h-1.6zM1021.69 294.43h1.6v1.6h-1.6zM1021.69 325.9h1.6v1.6h-1.6zM1021.69 357.37h1.6v1.6h-1.6zM1021.69 388.84h1.6v1.6h-1.6zM1021.69 420.31h1.6v1.6h-1.6zM1021.69 451.78h1.6v1.6h-1.6zM1021.69 483.25h1.6v1.6h-1.6zM1021.69 514.72h1.6v1.6h-1.6zM1021.69 546.19h1.6v1.6h-1.6zM1021.69 577.66h1.6v1.6h-1.6zM1021.69 609.13h1.6v1.6h-1.6zM1021.69 640.6h1.6v1.6h-1.6zM1021.69 672.07h1.6v1.6h-1.6zM1021.69 703.54h1.6v1.6h-1.6zM1021.69 735.01h1.6v1.6h-1.6zM1021.69 766.48h1.6v1.6h-1.6zM1021.69 797.95h1.6v1.6h-1.6zM1053.16 11.2h1.6v1.6h-1.6zM1053.16 42.67h1.6v1.6h-1.6zM1053.16 74.14h1.6v1.6h-1.6zM1053.16 105.61h1.6v1.6h-1.6zM1053.16 137.08h1.6v1.6h-1.6zM1053.16 168.55h1.6v1.6h-1.6zM1053.16 200.02h1.6v1.6h-1.6zM1053.16 231.49h1.6v1.6h-1.6zM1053.16 262.96h1.6v1.6h-1.6zM1053.16 294.43h1.6v1.6h-1.6zM1053.16 325.9h1.6v1.6h-1.6zM1053.16 357.37h1.6v1.6h-1.6zM1053.16 388.84h1.6v1.6h-1.6zM1053.16 420.31h1.6v1.6h-1.6zM1053.16 451.78h1.6v1.6h-1.6zM1053.16 483.25h1.6v1.6h-1.6zM1053.16 514.72h1.6v1.6h-1.6zM1053.16 546.19h1.6v1.6h-1.6zM1053.16 577.66h1.6v1.6h-1.6zM1053.16 609.13h1.6v1.6h-1.6zM1053.16 640.6h1.6v1.6h-1.6zM1053.16 672.07h1.6v1.6h-1.6zM1053.16 703.54h1.6v1.6h-1.6zM1053.16 735.01h1.6v1.6h-1.6zM1053.16 766.48h1.6v1.6h-1.6zM1053.16 797.95h1.6v1.6h-1.6zM1084.63 11.2h1.6v1.6h-1.6zM1084.63 42.67h1.6v1.6h-1.6zM1084.63 74.14h1.6v1.6h-1.6zM1084.63 105.61h1.6v1.6h-1.6zM1084.63 137.08h1.6v1.6h-1.6zM1084.63 168.55h1.6v1.6h-1.6zM1084.63 200.02h1.6v1.6h-1.6zM1084.63 231.49h1.6v1.6h-1.6zM1084.63 262.96h1.6v1.6h-1.6zM1084.63 294.43h1.6v1.6h-1.6zM1084.63 325.9h1.6v1.6h-1.6zM1084.63 357.37h1.6v1.6h-1.6zM1084.63 388.84h1.6v1.6h-1.6zM1084.63 420.31h1.6v1.6h-1.6zM1084.63 451.78h1.6v1.6h-1.6zM1084.63 483.25h1.6v1.6h-1.6zM1084.63 514.72h1.6v1.6h-1.6zM1084.63 546.19h1.6v1.6h-1.6zM1084.63 577.66h1.6v1.6h-1.6zM1084.63 609.13h1.6v1.6h-1.6zM1084.63 640.6h1.6v1.6h-1.6zM1084.63 672.07h1.6v1.6h-1.6zM1084.63 703.54h1.6v1.6h-1.6zM1084.63 735.01h1.6v1.6h-1.6zM1084.63 766.48h1.6v1.6h-1.6zM1084.63 797.95h1.6v1.6h-1.6zM1116.1 11.2h1.6v1.6h-1.6zM1116.1 74.14h1.6v1.6h-1.6zM1116.1 105.61h1.6v1.6h-1.6zM1116.1 137.08h1.6v1.6h-1.6zM1116.1 168.55h1.6v1.6h-1.6zM1116.1 231.49h1.6v1.6h-1.6zM1116.1 262.96h1.6v1.6h-1.6zM1116.1 294.43h1.6v1.6h-1.6zM1116.1 325.9h1.6v1.6h-1.6zM1116.1 388.84h1.6v1.6h-1.6zM1116.1 420.31h1.6v1.6h-1.6zM1116.1 451.78h1.6v1.6h-1.6zM1116.1 483.25h1.6v1.6h-1.6zM1116.1 546.19h1.6v1.6h-1.6zM1116.1 577.66h1.6v1.6h-1.6zM1116.1 609.13h1.6v1.6h-1.6zM1116.1 640.6h1.6v1.6h-1.6zM1116.1 703.54h1.6v1.6h-1.6zM1116.1 735.01h1.6v1.6h-1.6zM1116.1 766.48h1.6v1.6h-1.6zM1116.1 797.95h1.6v1.6h-1.6zM1147.57 11.2h1.6v1.6h-1.6zM1147.57 42.67h1.6v1.6h-1.6zM1147.57 74.14h1.6v1.6h-1.6zM1147.57 105.61h1.6v1.6h-1.6zM1147.57 137.08h1.6v1.6h-1.6zM1147.57 168.55h1.6v1.6h-1.6zM1147.57 200.02h1.6v1.6h-1.6zM1147.57 231.49h1.6v1.6h-1.6zM1147.57 262.96h1.6v1.6h-1.6zM1147.57 294.43h1.6v1.6h-1.6zM1147.57 325.9h1.6v1.6h-1.6zM1147.57 357.37h1.6v1.6h-1.6zM1147.57 388.84h1.6v1.6h-1.6zM1147.57 420.31h1.6v1.6h-1.6zM1147.57 451.78h1.6v1.6h-1.6zM1147.57 483.25h1.6v1.6h-1.6zM1147.57 514.72h1.6v1.6h-1.6zM1147.57 546.19h1.6v1.6h-1.6zM1147.57 577.66h1.6v1.6h-1.6zM1147.57 609.13h1.6v1.6h-1.6zM1147.57 640.6h1.6v1.6h-1.6zM1147.57 672.07h1.6v1.6h-1.6zM1147.57 703.54h1.6v1.6h-1.6zM1147.57 735.01h1.6v1.6h-1.6zM1147.57 766.48h1.6v1.6h-1.6zM1147.57 797.95h1.6v1.6h-1.6zM1179.04 11.2h1.6v1.6h-1.6zM1179.04 42.67h1.6v1.6h-1.6zM1179.04 74.14h1.6v1.6h-1.6zM1179.04 105.61h1.6v1.6h-1.6zM1179.04 137.08h1.6v1.6h-1.6zM1179.04 168.55h1.6v1.6h-1.6zM1179.04 200.02h1.6v1.6h-1.6zM1179.04 231.49h1.6v1.6h-1.6zM1179.04 262.96h1.6v1.6h-1.6zM1179.04 294.43h1.6v1.6h-1.6zM1179.04 325.9h1.6v1.6h-1.6zM1179.04 357.37h1.6v1.6h-1.6zM1179.04 388.84h1.6v1.6h-1.6zM1179.04 420.31h1.6v1.6h-1.6zM1179.04 451.78h1.6v1.6h-1.6zM1179.04 483.25h1.6v1.6h-1.6zM1179.04 514.72h1.6v1.6h-1.6zM1179.04 546.19h1.6v1.6h-1.6zM1179.04 577.66h1.6v1.6h-1.6zM1179.04 609.13h1.6v1.6h-1.6zM1179.04 640.6h1.6v1.6h-1.6zM1179.04 672.07h1.6v1.6h-1.6zM1179.04 703.54h1.6v1.6h-1.6zM1179.04 735.01h1.6v1.6h-1.6zM1179.04 766.48h1.6v1.6h-1.6zM1179.04 797.95h1.6v1.6h-1.6zM1210.51 11.2h1.6v1.6h-1.6zM1210.51 42.67h1.6v1.6h-1.6zM1210.51 74.14h1.6v1.6h-1.6zM1210.51 105.61h1.6v1.6h-1.6zM1210.51 137.08h1.6v1.6h-1.6zM1210.51 168.55h1.6v1.6h-1.6zM1210.51 200.02h1.6v1.6h-1.6zM1210.51 231.49h1.6v1.6h-1.6zM1210.51 262.96h1.6v1.6h-1.6zM1210.51 294.43h1.6v1.6h-1.6zM1210.51 325.9h1.6v1.6h-1.6zM1210.51 357.37h1.6v1.6h-1.6zM1210.51 388.84h1.6v1.6h-1.6zM1210.51 420.31h1.6v1.6h-1.6zM1210.51 451.78h1.6v1.6h-1.6zM1210.51 483.25h1.6v1.6h-1.6zM1210.51 514.72h1.6v1.6h-1.6zM1210.51 546.19h1.6v1.6h-1.6zM1210.51 577.66h1.6v1.6h-1.6zM1210.51 609.13h1.6v1.6h-1.6zM1210.51 640.6h1.6v1.6h-1.6zM1210.51 672.07h1.6v1.6h-1.6zM1210.51 703.54h1.6v1.6h-1.6zM1210.51 735.01h1.6v1.6h-1.6zM1210.51 766.48h1.6v1.6h-1.6zM1210.51 797.95h1.6v1.6h-1.6zM1241.98 11.2h1.6v1.6h-1.6zM1241.98 42.67h1.6v1.6h-1.6zM1241.98 74.14h1.6v1.6h-1.6zM1241.98 105.61h1.6v1.6h-1.6zM1241.98 137.08h1.6v1.6h-1.6zM1241.98 168.55h1.6v1.6h-1.6zM1241.98 200.02h1.6v1.6h-1.6zM1241.98 231.49h1.6v1.6h-1.6zM1241.98 262.96h1.6v1.6h-1.6zM1241.98 294.43h1.6v1.6h-1.6zM1241.98 325.9h1.6v1.6h-1.6zM1241.98 357.37h1.6v1.6h-1.6zM1241.98 388.84h1.6v1.6h-1.6zM1241.98 420.31h1.6v1.6h-1.6zM1241.98 451.78h1.6v1.6h-1.6zM1241.98 483.25h1.6v1.6h-1.6zM1241.98 514.72h1.6v1.6h-1.6zM1241.98 546.19h1.6v1.6h-1.6zM1241.98 577.66h1.6v1.6h-1.6zM1241.98 609.13h1.6v1.6h-1.6zM1241.98 640.6h1.6v1.6h-1.6zM1241.98 672.07h1.6v1.6h-1.6zM1241.98 703.54h1.6v1.6h-1.6zM1241.98 735.01h1.6v1.6h-1.6zM1241.98 766.48h1.6v1.6h-1.6zM1241.98 797.95h1.6v1.6h-1.6zM1273.45 11.2h1.6v1.6h-1.6zM1273.45 74.14h1.6v1.6h-1.6zM1273.45 105.61h1.6v1.6h-1.6zM1273.45 137.08h1.6v1.6h-1.6zM1273.45 168.55h1.6v1.6h-1.6zM1273.45 231.49h1.6v1.6h-1.6zM1273.45 262.96h1.6v1.6h-1.6zM1273.45 294.43h1.6v1.6h-1.6zM1273.45 325.9h1.6v1.6h-1.6zM1273.45 388.84h1.6v1.6h-1.6zM1273.45 420.31h1.6v1.6h-1.6zM1273.45 451.78h1.6v1.6h-1.6zM1273.45 483.25h1.6v1.6h-1.6zM1273.45 546.19h1.6v1.6h-1.6zM1273.45 577.66h1.6v1.6h-1.6zM1273.45 609.13h1.6v1.6h-1.6zM1273.45 640.6h1.6v1.6h-1.6zM1273.45 703.54h1.6v1.6h-1.6zM1273.45 735.01h1.6v1.6h-1.6zM1273.45 766.48h1.6v1.6h-1.6zM1273.45 797.95h1.6v1.6h-1.6zM1304.92 11.2h1.6v1.6h-1.6zM1304.92 42.67h1.6v1.6h-1.6zM1304.92 74.14h1.6v1.6h-1.6zM1304.92 105.61h1.6v1.6h-1.6zM1304.92 137.08h1.6v1.6h-1.6zM1304.92 168.55h1.6v1.6h-1.6zM1304.92 200.02h1.6v1.6h-1.6zM1304.92 231.49h1.6v1.6h-1.6zM1304.92 262.96h1.6v1.6h-1.6zM1304.92 294.43h1.6v1.6h-1.6zM1304.92 325.9h1.6v1.6h-1.6zM1304.92 357.37h1.6v1.6h-1.6zM1304.92 388.84h1.6v1.6h-1.6zM1304.92 420.31h1.6v1.6h-1.6zM1304.92 451.78h1.6v1.6h-1.6zM1304.92 483.25h1.6v1.6h-1.6zM1304.92 514.72h1.6v1.6h-1.6zM1304.92 546.19h1.6v1.6h-1.6zM1304.92 577.66h1.6v1.6h-1.6zM1304.92 609.13h1.6v1.6h-1.6zM1304.92 640.6h1.6v1.6h-1.6zM1304.92 672.07h1.6v1.6h-1.6zM1304.92 703.54h1.6v1.6h-1.6zM1304.92 735.01h1.6v1.6h-1.6zM1304.92 766.48h1.6v1.6h-1.6zM1304.92 797.95h1.6v1.6h-1.6zM1336.39 11.2h1.6v1.6h-1.6zM1336.39 42.67h1.6v1.6h-1.6zM1336.39 74.14h1.6v1.6h-1.6zM1336.39 105.61h1.6v1.6h-1.6zM1336.39 137.08h1.6v1.6h-1.6zM1336.39 168.55h1.6v1.6h-1.6zM1336.39 200.02h1.6v1.6h-1.6zM1336.39 231.49h1.6v1.6h-1.6zM1336.39 262.96h1.6v1.6h-1.6zM1336.39 294.43h1.6v1.6h-1.6zM1336.39 325.9h1.6v1.6h-1.6zM1336.39 357.37h1.6v1.6h-1.6zM1336.39 388.84h1.6v1.6h-1.6zM1336.39 420.31h1.6v1.6h-1.6zM1336.39 451.78h1.6v1.6h-1.6zM1336.39 483.25h1.6v1.6h-1.6zM1336.39 514.72h1.6v1.6h-1.6zM1336.39 546.19h1.6v1.6h-1.6zM1336.39 577.66h1.6v1.6h-1.6zM1336.39 609.13h1.6v1.6h-1.6zM1336.39 640.6h1.6v1.6h-1.6zM1336.39 672.07h1.6v1.6h-1.6zM1336.39 703.54h1.6v1.6h-1.6zM1336.39 735.01h1.6v1.6h-1.6zM1336.39 766.48h1.6v1.6h-1.6zM1336.39 797.95h1.6v1.6h-1.6zM1367.86 11.2h1.6v1.6h-1.6zM1367.86 42.67h1.6v1.6h-1.6zM1367.86 74.14h1.6v1.6h-1.6zM1367.86 105.61h1.6v1.6h-1.6zM1367.86 137.08h1.6v1.6h-1.6zM1367.86 168.55h1.6v1.6h-1.6zM1367.86 200.02h1.6v1.6h-1.6zM1367.86 231.49h1.6v1.6h-1.6zM1367.86 262.96h1.6v1.6h-1.6zM1367.86 294.43h1.6v1.6h-1.6zM1367.86 325.9h1.6v1.6h-1.6zM1367.86 357.37h1.6v1.6h-1.6zM1367.86 388.84h1.6v1.6h-1.6zM1367.86 420.31h1.6v1.6h-1.6zM1367.86 451.78h1.6v1.6h-1.6zM1367.86 483.25h1.6v1.6h-1.6zM1367.86 514.72h1.6v1.6h-1.6zM1367.86 546.19h1.6v1.6h-1.6zM1367.86 577.66h1.6v1.6h-1.6zM1367.86 609.13h1.6v1.6h-1.6zM1367.86 640.6h1.6v1.6h-1.6zM1367.86 672.07h1.6v1.6h-1.6zM1367.86 703.54h1.6v1.6h-1.6zM1367.86 735.01h1.6v1.6h-1.6zM1367.86 766.48h1.6v1.6h-1.6zM1367.86 797.95h1.6v1.6h-1.6zM1399.33 11.2h1.6v1.6h-1.6zM1399.33 42.67h1.6v1.6h-1.6zM1399.33 74.14h1.6v1.6h-1.6zM1399.33 105.61h1.6v1.6h-1.6zM1399.33 137.08h1.6v1.6h-1.6zM1399.33 168.55h1.6v1.6h-1.6zM1399.33 200.02h1.6v1.6h-1.6zM1399.33 231.49h1.6v1.6h-1.6zM1399.33 262.96h1.6v1.6h-1.6zM1399.33 294.43h1.6v1.6h-1.6zM1399.33 325.9h1.6v1.6h-1.6zM1399.33 357.37h1.6v1.6h-1.6zM1399.33 388.84h1.6v1.6h-1.6zM1399.33 420.31h1.6v1.6h-1.6zM1399.33 451.78h1.6v1.6h-1.6zM1399.33 483.25h1.6v1.6h-1.6zM1399.33 514.72h1.6v1.6h-1.6zM1399.33 546.19h1.6v1.6h-1.6zM1399.33 577.66h1.6v1.6h-1.6zM1399.33 609.13h1.6v1.6h-1.6zM1399.33 640.6h1.6v1.6h-1.6zM1399.33 672.07h1.6v1.6h-1.6zM1399.33 703.54h1.6v1.6h-1.6zM1399.33 735.01h1.6v1.6h-1.6zM1399.33 766.48h1.6v1.6h-1.6zM1399.33 797.95h1.6v1.6h-1.6zM1430.8 11.2h1.6v1.6h-1.6zM1430.8 74.14h1.6v1.6h-1.6zM1430.8 105.61h1.6v1.6h-1.6zM1430.8 137.08h1.6v1.6h-1.6zM1430.8 168.55h1.6v1.6h-1.6zM1430.8 231.49h1.6v1.6h-1.6zM1430.8 262.96h1.6v1.6h-1.6zM1430.8 294.43h1.6v1.6h-1.6zM1430.8 325.9h1.6v1.6h-1.6zM1430.8 388.84h1.6v1.6h-1.6zM1430.8 420.31h1.6v1.6h-1.6zM1430.8 451.78h1.6v1.6h-1.6zM1430.8 483.25h1.6v1.6h-1.6zM1430.8 546.19h1.6v1.6h-1.6zM1430.8 577.66h1.6v1.6h-1.6zM1430.8 609.13h1.6v1.6h-1.6zM1430.8 640.6h1.6v1.6h-1.6zM1430.8 703.54h1.6v1.6h-1.6zM1430.8 735.01h1.6v1.6h-1.6zM1430.8 766.48h1.6v1.6h-1.6zM1430.8 797.95h1.6v1.6h-1.6zM1462.27 11.2h1.6v1.6h-1.6zM1462.27 42.67h1.6v1.6h-1.6zM1462.27 74.14h1.6v1.6h-1.6zM1462.27 105.61h1.6v1.6h-1.6zM1462.27 137.08h1.6v1.6h-1.6zM1462.27 168.55h1.6v1.6h-1.6zM1462.27 200.02h1.6v1.6h-1.6zM1462.27 231.49h1.6v1.6h-1.6zM1462.27 262.96h1.6v1.6h-1.6zM1462.27 294.43h1.6v1.6h-1.6zM1462.27 325.9h1.6v1.6h-1.6zM1462.27 357.37h1.6v1.6h-1.6zM1462.27 388.84h1.6v1.6h-1.6zM1462.27 420.31h1.6v1.6h-1.6zM1462.27 451.78h1.6v1.6h-1.6zM1462.27 483.25h1.6v1.6h-1.6zM1462.27 514.72h1.6v1.6h-1.6zM1462.27 546.19h1.6v1.6h-1.6zM1462.27 577.66h1.6v1.6h-1.6zM1462.27 609.13h1.6v1.6h-1.6zM1462.27 640.6h1.6v1.6h-1.6zM1462.27 672.07h1.6v1.6h-1.6zM1462.27 703.54h1.6v1.6h-1.6zM1462.27 735.01h1.6v1.6h-1.6zM1462.27 766.48h1.6v1.6h-1.6zM1462.27 797.95h1.6v1.6h-1.6zM1493.74 11.2h1.6v1.6h-1.6zM1493.74 42.67h1.6v1.6h-1.6zM1493.74 74.14h1.6v1.6h-1.6zM1493.74 105.61h1.6v1.6h-1.6zM1493.74 137.08h1.6v1.6h-1.6zM1493.74 168.55h1.6v1.6h-1.6zM1493.74 200.02h1.6v1.6h-1.6zM1493.74 231.49h1.6v1.6h-1.6zM1493.74 262.96h1.6v1.6h-1.6zM1493.74 294.43h1.6v1.6h-1.6zM1493.74 325.9h1.6v1.6h-1.6zM1493.74 357.37h1.6v1.6h-1.6zM1493.74 388.84h1.6v1.6h-1.6zM1493.74 420.31h1.6v1.6h-1.6zM1493.74 451.78h1.6v1.6h-1.6zM1493.74 483.25h1.6v1.6h-1.6zM1493.74 514.72h1.6v1.6h-1.6zM1493.74 546.19h1.6v1.6h-1.6zM1493.74 577.66h1.6v1.6h-1.6zM1493.74 609.13h1.6v1.6h-1.6zM1493.74 640.6h1.6v1.6h-1.6zM1493.74 672.07h1.6v1.6h-1.6zM1493.74 703.54h1.6v1.6h-1.6zM1493.74 735.01h1.6v1.6h-1.6zM1493.74 766.48h1.6v1.6h-1.6zM1493.74 797.95h1.6v1.6h-1.6zM1525.21 11.2h1.6v1.6h-1.6zM1525.21 42.67h1.6v1.6h-1.6zM1525.21 74.14h1.6v1.6h-1.6zM1525.21 105.61h1.6v1.6h-1.6zM1525.21 137.08h1.6v1.6h-1.6zM1525.21 168.55h1.6v1.6h-1.6zM1525.21 200.02h1.6v1.6h-1.6zM1525.21 231.49h1.6v1.6h-1.6zM1525.21 262.96h1.6v1.6h-1.6zM1525.21 294.43h1.6v1.6h-1.6zM1525.21 325.9h1.6v1.6h-1.6zM1525.21 357.37h1.6v1.6h-1.6zM1525.21 388.84h1.6v1.6h-1.6zM1525.21 420.31h1.6v1.6h-1.6zM1525.21 451.78h1.6v1.6h-1.6zM1525.21 483.25h1.6v1.6h-1.6zM1525.21 514.72h1.6v1.6h-1.6zM1525.21 546.19h1.6v1.6h-1.6zM1525.21 577.66h1.6v1.6h-1.6zM1525.21 609.13h1.6v1.6h-1.6zM1525.21 640.6h1.6v1.6h-1.6zM1525.21 672.07h1.6v1.6h-1.6zM1525.21 703.54h1.6v1.6h-1.6zM1525.21 735.01h1.6v1.6h-1.6zM1525.21 766.48h1.6v1.6h-1.6zM1525.21 797.95h1.6v1.6h-1.6zM1556.68 11.2h1.6v1.6h-1.6zM1556.68 42.67h1.6v1.6h-1.6zM1556.68 74.14h1.6v1.6h-1.6zM1556.68 105.61h1.6v1.6h-1.6zM1556.68 137.08h1.6v1.6h-1.6zM1556.68 168.55h1.6v1.6h-1.6zM1556.68 200.02h1.6v1.6h-1.6zM1556.68 231.49h1.6v1.6h-1.6zM1556.68 262.96h1.6v1.6h-1.6zM1556.68 294.43h1.6v1.6h-1.6zM1556.68 325.9h1.6v1.6h-1.6zM1556.68 357.37h1.6v1.6h-1.6zM1556.68 388.84h1.6v1.6h-1.6zM1556.68 420.31h1.6v1.6h-1.6zM1556.68 451.78h1.6v1.6h-1.6zM1556.68 483.25h1.6v1.6h-1.6zM1556.68 514.72h1.6v1.6h-1.6zM1556.68 546.19h1.6v1.6h-1.6zM1556.68 577.66h1.6v1.6h-1.6zM1556.68 609.13h1.6v1.6h-1.6zM1556.68 640.6h1.6v1.6h-1.6zM1556.68 672.07h1.6v1.6h-1.6zM1556.68 703.54h1.6v1.6h-1.6zM1556.68 735.01h1.6v1.6h-1.6zM1556.68 766.48h1.6v1.6h-1.6zM1556.68 797.95h1.6v1.6h-1.6zM1588.15 11.2h1.6v1.6h-1.6zM1588.15 74.14h1.6v1.6h-1.6zM1588.15 105.61h1.6v1.6h-1.6zM1588.15 137.08h1.6v1.6h-1.6zM1588.15 168.55h1.6v1.6h-1.6zM1588.15 231.49h1.6v1.6h-1.6zM1588.15 262.96h1.6v1.6h-1.6zM1588.15 294.43h1.6v1.6h-1.6zM1588.15 325.9h1.6v1.6h-1.6zM1588.15 388.84h1.6v1.6h-1.6zM1588.15 420.31h1.6v1.6h-1.6zM1588.15 451.78h1.6v1.6h-1.6zM1588.15 483.25h1.6v1.6h-1.6zM1588.15 546.19h1.6v1.6h-1.6zM1588.15 577.66h1.6v1.6h-1.6zM1588.15 609.13h1.6v1.6h-1.6zM1588.15 640.6h1.6v1.6h-1.6zM1588.15 703.54h1.6v1.6h-1.6zM1588.15 735.01h1.6v1.6h-1.6zM1588.15 766.48h1.6v1.6h-1.6zM1588.15 797.95h1.6v1.6h-1.6zM1619.62 11.2h1.6v1.6h-1.6zM1619.62 42.67h1.6v1.6h-1.6zM1619.62 74.14h1.6v1.6h-1.6zM1619.62 105.61h1.6v1.6h-1.6zM1619.62 137.08h1.6v1.6h-1.6zM1619.62 168.55h1.6v1.6h-1.6zM1619.62 200.02h1.6v1.6h-1.6zM1619.62 231.49h1.6v1.6h-1.6zM1619.62 262.96h1.6v1.6h-1.6zM1619.62 294.43h1.6v1.6h-1.6zM1619.62 325.9h1.6v1.6h-1.6zM1619.62 357.37h1.6v1.6h-1.6zM1619.62 388.84h1.6v1.6h-1.6zM1619.62 420.31h1.6v1.6h-1.6zM1619.62 451.78h1.6v1.6h-1.6zM1619.62 483.25h1.6v1.6h-1.6zM1619.62 514.72h1.6v1.6h-1.6zM1619.62 546.19h1.6v1.6h-1.6zM1619.62 577.66h1.6v1.6h-1.6zM1619.62 609.13h1.6v1.6h-1.6zM1619.62 640.6h1.6v1.6h-1.6zM1619.62 672.07h1.6v1.6h-1.6zM1619.62 703.54h1.6v1.6h-1.6zM1619.62 735.01h1.6v1.6h-1.6zM1619.62 766.48h1.6v1.6h-1.6zM1619.62 797.95h1.6v1.6h-1.6zM1651.09 11.2h1.6v1.6h-1.6zM1651.09 42.67h1.6v1.6h-1.6zM1651.09 74.14h1.6v1.6h-1.6zM1651.09 105.61h1.6v1.6h-1.6zM1651.09 137.08h1.6v1.6h-1.6zM1651.09 168.55h1.6v1.6h-1.6zM1651.09 200.02h1.6v1.6h-1.6zM1651.09 231.49h1.6v1.6h-1.6zM1651.09 262.96h1.6v1.6h-1.6zM1651.09 294.43h1.6v1.6h-1.6zM1651.09 325.9h1.6v1.6h-1.6zM1651.09 357.37h1.6v1.6h-1.6zM1651.09 388.84h1.6v1.6h-1.6zM1651.09 420.31h1.6v1.6h-1.6zM1651.09 451.78h1.6v1.6h-1.6zM1651.09 483.25h1.6v1.6h-1.6zM1651.09 514.72h1.6v1.6h-1.6zM1651.09 546.19h1.6v1.6h-1.6zM1651.09 577.66h1.6v1.6h-1.6zM1651.09 609.13h1.6v1.6h-1.6zM1651.09 640.6h1.6v1.6h-1.6zM1651.09 672.07h1.6v1.6h-1.6zM1651.09 703.54h1.6v1.6h-1.6zM1651.09 735.01h1.6v1.6h-1.6zM1651.09 766.48h1.6v1.6h-1.6zM1651.09 797.95h1.6v1.6h-1.6zM1682.56 11.2h1.6v1.6h-1.6zM1682.56 42.67h1.6v1.6h-1.6zM1682.56 74.14h1.6v1.6h-1.6zM1682.56 105.61h1.6v1.6h-1.6zM1682.56 137.08h1.6v1.6h-1.6zM1682.56 168.55h1.6v1.6h-1.6zM1682.56 200.02h1.6v1.6h-1.6zM1682.56 231.49h1.6v1.6h-1.6zM1682.56 262.96h1.6v1.6h-1.6zM1682.56 294.43h1.6v1.6h-1.6zM1682.56 325.9h1.6v1.6h-1.6zM1682.56 357.37h1.6v1.6h-1.6zM1682.56 388.84h1.6v1.6h-1.6zM1682.56 420.31h1.6v1.6h-1.6zM1682.56 451.78h1.6v1.6h-1.6zM1682.56 483.25h1.6v1.6h-1.6zM1682.56 514.72h1.6v1.6h-1.6zM1682.56 546.19h1.6v1.6h-1.6zM1682.56 577.66h1.6v1.6h-1.6zM1682.56 609.13h1.6v1.6h-1.6zM1682.56 640.6h1.6v1.6h-1.6zM1682.56 672.07h1.6v1.6h-1.6zM1682.56 703.54h1.6v1.6h-1.6zM1682.56 735.01h1.6v1.6h-1.6zM1682.56 766.48h1.6v1.6h-1.6zM1682.56 797.95h1.6v1.6h-1.6zM1714.03 11.2h1.6v1.6h-1.6zM1714.03 42.67h1.6v1.6h-1.6zM1714.03 74.14h1.6v1.6h-1.6zM1714.03 105.61h1.6v1.6h-1.6zM1714.03 137.08h1.6v1.6h-1.6zM1714.03 168.55h1.6v1.6h-1.6zM1714.03 200.02h1.6v1.6h-1.6zM1714.03 231.49h1.6v1.6h-1.6zM1714.03 262.96h1.6v1.6h-1.6zM1714.03 294.43h1.6v1.6h-1.6zM1714.03 325.9h1.6v1.6h-1.6zM1714.03 357.37h1.6v1.6h-1.6zM1714.03 388.84h1.6v1.6h-1.6zM1714.03 420.31h1.6v1.6h-1.6zM1714.03 451.78h1.6v1.6h-1.6zM1714.03 483.25h1.6v1.6h-1.6zM1714.03 514.72h1.6v1.6h-1.6zM1714.03 546.19h1.6v1.6h-1.6zM1714.03 577.66h1.6v1.6h-1.6zM1714.03 609.13h1.6v1.6h-1.6zM1714.03 640.6h1.6v1.6h-1.6zM1714.03 672.07h1.6v1.6h-1.6zM1714.03 703.54h1.6v1.6h-1.6zM1714.03 735.01h1.6v1.6h-1.6zM1714.03 766.48h1.6v1.6h-1.6zM1714.03 797.95h1.6v1.6h-1.6z" fill="#272727"/><path d="M14.3 42.32h2.3v2.3h-2.3zM14.3 199.67h2.3v2.3h-2.3zM14.3 357.02h2.3v2.3h-2.3zM14.3 514.37h2.3v2.3h-2.3zM14.3 671.72h2.3v2.3h-2.3zM171.65 42.32h2.3v2.3h-2.3zM171.65 199.67h2.3v2.3h-2.3zM171.65 357.02h2.3v2.3h-2.3zM171.65 514.37h2.3v2.3h-2.3zM171.65 671.72h2.3v2.3h-2.3zM329 42.32h2.3v2.3h-2.3zM329 199.67h2.3v2.3h-2.3zM329 357.02h2.3v2.3h-2.3zM329 514.37h2.3v2.3h-2.3zM329 671.72h2.3v2.3h-2.3zM486.35 42.32h2.3v2.3h-2.3zM486.35 199.67h2.3v2.3h-2.3zM486.35 357.02h2.3v2.3h-2.3zM486.35 514.37h2.3v2.3h-2.3zM486.35 671.72h2.3v2.3h-2.3zM643.7 42.32h2.3v2.3h-2.3zM643.7 199.67h2.3v2.3h-2.3zM643.7 357.02h2.3v2.3h-2.3zM643.7 514.37h2.3v2.3h-2.3zM643.7 671.72h2.3v2.3h-2.3zM801.05 42.32h2.3v2.3h-2.3zM801.05 199.67h2.3v2.3h-2.3zM801.05 357.02h2.3v2.3h-2.3zM801.05 514.37h2.3v2.3h-2.3zM801.05 671.72h2.3v2.3h-2.3zM958.4 42.32h2.3v2.3h-2.3zM958.4 199.67h2.3v2.3h-2.3zM958.4 357.02h2.3v2.3h-2.3zM958.4 514.37h2.3v2.3h-2.3zM958.4 671.72h2.3v2.3h-2.3zM1115.75 42.32h2.3v2.3h-2.3zM1115.75 199.67h2.3v2.3h-2.3zM1115.75 357.02h2.3v2.3h-2.3zM1115.75 514.37h2.3v2.3h-2.3zM1115.75 671.72h2.3v2.3h-2.3zM1273.1 42.32h2.3v2.3h-2.3zM1273.1 199.67h2.3v2.3h-2.3zM1273.1 357.02h2.3v2.3h-2.3zM1273.1 514.37h2.3v2.3h-2.3zM1273.1 671.72h2.3v2.3h-2.3zM1430.45 42.32h2.3v2.3h-2.3zM1430.45 199.67h2.3v2.3h-2.3zM1430.45 357.02h2.3v2.3h-2.3zM1430.45 514.37h2.3v2.3h-2.3zM1430.45 671.72h2.3v2.3h-2.3zM1587.8 42.32h2.3v2.3h-2.3zM1587.8 199.67h2.3v2.3h-2.3zM1587.8 357.02h2.3v2.3h-2.3zM1587.8 514.37h2.3v2.3h-2.3zM1587.8 671.72h2.3v2.3h-2.3z" fill="#2c2c2c"/><path d="M422 324.3 C467 324.3 773 288.4 818 288.4" fill="none" stroke="#141414" stroke-opacity=".6" stroke-width="5"/><path d="M422 324.3 C467 324.3 773 288.4 818 288.4" fill="none" stroke="#ededb5" stroke-width="3.5"/><path d="M422 324.3 C577 324.3 663 682.1 818 682.1" fill="none" stroke="#141414" stroke-opacity=".6" stroke-width="5"/><path d="M422 324.3 C577 324.3 663 682.1 818 682.1" fill="none" stroke="#ededb5" stroke-width="3.5"/><path d="M1196 253.7 C1217 253.7 1253 292 1274 292" fill="none" stroke="#141414" stroke-opacity=".6" stroke-width="5"/><path d="M1196 253.7 C1217 253.7 1253 292 1274 292" fill="none" stroke="#d4ecd2" stroke-width="3.5"/></svg>
<div style="left:13px;top:8px;width:54px;height:34px;background:#282828;border-radius:7px;box-shadow:inset 0 0 0 1px #3d3d3d;"></div>
<div style="left:75px;top:8px;width:155px;height:34px;background:#282828;border-radius:7px;box-shadow:inset 0 0 0 1px #3d3d3d;"></div>
<div class="t" style="top:15.07px;font-size:20px;line-height:20px;color:#e6e6e6;left:120px;">Object</div>
<div class="t" style="top:15.37px;font-size:20px;line-height:20px;color:#e6e6e6;left:251px;">View</div>
<div class="t" style="top:15.37px;font-size:20px;line-height:20px;color:#e6e6e6;left:320.5px;">Select</div>
<div class="t" style="top:15.37px;font-size:20px;line-height:20px;color:#e6e6e6;left:402px;">Add</div>
<div class="t" style="top:15.37px;font-size:20px;line-height:20px;color:#e6e6e6;left:465px;">Node</div>
<div style="left:535px;top:13.5px;width:22px;height:22.5px;background:#4772b3;border-radius:4px;"></div>
<div class="t" style="top:15.37px;font-size:20px;line-height:20px;color:#ffffff;left:563px;">Use Nodes</div>
<div style="left:715px;top:8px;width:136px;height:34px;background:#282828;border-radius:7px;box-shadow:inset 0 0 0 1px #3d3d3d;"></div>
<div class="t" style="top:15.07px;font-size:20px;line-height:20px;color:#e6e6e6;left:728.2px;">Slot 1</div>
<div style="left:859px;top:8px;width:331.5px;height:34px;background:#282828;border-radius:7px;box-shadow:inset 0 0 0 1px #3d3d3d;"></div>
<div style="left:913px;top:8px;width:135.3px;height:34px;background:#1c1c1c;box-shadow:inset 0 1px 0 #3d3d3d, inset 0 -1px 0 #3d3d3d;"></div>
<div style="left:1048.3px;top:8px;width:142.2px;height:34px;background:#545454;border-radius:0 7px 7px 0;"></div>
<div style="left:1087.8px;top:8px;width:1px;height:34px;background:#474747;"></div>
<div style="left:1121.9px;top:8px;width:1px;height:34px;background:#474747;"></div>
<div style="left:1156px;top:8px;width:1px;height:34px;background:#474747;"></div>
<div class="t" style="top:15.07px;font-size:20px;line-height:20px;color:#e6e6e6;left:925.6px;">Material</div>
<div class="t" style="top:15.07px;font-size:20px;line-height:20px;color:#e6e6e6;left:1048.3px;width:40px;text-align:center;">3</div>
<div style="left:1506.5px;top:8.5px;width:33.2px;height:33px;background:#393939;border-radius:8px;"></div>
<div style="left:1548.3px;top:8px;width:87.2px;height:34px;background:#282828;border-radius:7px;box-shadow:inset 0 0 0 1px #3d3d3d;"></div>
<div style="left:1548.3px;top:8px;width:33.2px;height:34px;background:#545454;border-radius:7px 0 0 7px;"></div>
<div style="left:1644.9px;top:8px;width:67px;height:34px;background:#282828;border-radius:7px;box-shadow:inset 0 0 0 1px #3d3d3d;"></div>
<div style="left:1644.9px;top:8px;width:32.3px;height:34px;background:#4772b3;border-radius:7px 0 0 7px;"></div>
<div style="left:0px;top:71px;width:13px;height:24px;background:#181818;border-radius:0 5px 5px 0;"></div>
<div class="t" style="top:74.57px;font-size:20px;line-height:20px;color:#e6e6e6;left:73.5px;">casino3</div>
<div class="t" style="top:74.57px;font-size:20px;line-height:20px;color:#e6e6e6;left:237.2px;">casino3</div>
<div class="t" style="top:74.27px;font-size:20px;line-height:20px;color:#e6e6e6;left:401px;">Material</div>
<div style="left:1715px;top:62px;width:6px;height:757px;background:#2d2d2d;border-radius:3px;"></div>
<div style="left:1710px;top:71px;width:14px;height:23.5px;background:#202020;border-radius:5px 0 0 5px;"></div>
<div style="left:202px;top:271px;width:220px;height:261px;background:#303030;border-radius:6px;overflow:hidden;box-shadow:0 1px 10px 3px rgba(0,0,0,.55);"><div style="position:absolute;left:0;top:0;width:100%;height:31.8px;background:#83314a;box-shadow:0 1px 0 rgba(0,0,0,.18)"></div></div>
<div class="t" style="top:276.86px;font-size:18px;line-height:18px;color:#e6e6e6;left:240px;text-shadow:0 1px 1px rgba(0,0,0,.55);">Attribute</div>
<div class="t" style="top:314.46px;font-size:18px;line-height:18px;color:#e6e6e6;left:-194.2px;width:600px;text-align:right;">Color</div>
<div class="t" style="top:347.86px;font-size:18px;line-height:18px;color:#e6e6e6;left:-194.2px;width:600px;text-align:right;">Vector</div>
<div class="t" style="top:382.16px;font-size:18px;line-height:18px;color:#e6e6e6;left:-194.2px;width:600px;text-align:right;">Fac</div>
<div class="t" style="top:416.46px;font-size:18px;line-height:18px;color:#e6e6e6;left:-194.2px;width:600px;text-align:right;">Alpha</div>
<div class="t" style="top:459.26px;font-size:18px;line-height:18px;color:#e6e6e6;left:218.5px;">Type:</div>
<div style="left:277.8px;top:452.9px;width:129px;height:29.9px;background:#282828;border-radius:6px;box-shadow:inset 0 0 0 1px #3a3a3a;"></div>
<div class="t" style="top:459.26px;font-size:18px;line-height:18px;color:#e6e6e6;left:290.5px;">Geometry</div>
<div class="t" style="top:497.16px;font-size:18px;line-height:18px;color:#e6e6e6;left:218.5px;">Name:</div>
<div style="left:277.8px;top:491.1px;width:129px;height:29.7px;background:#1d1d1d;border-radius:6px;box-shadow:inset 0 0 0 1px #383838;"></div>
<div class="t" style="top:497.16px;font-size:18px;line-height:18px;color:#e6e6e6;left:290.5px;letter-spacing:0.35px;">Attribute</div>
<div style="left:817.2px;top:200.3px;width:379.7px;height:576.6px;background:#303030;border-radius:6px;overflow:hidden;box-shadow:0 1px 10px 3px rgba(0,0,0,.55);"><div style="position:absolute;left:0;top:0;width:100%;height:31.8px;background:#2b652b;box-shadow:0 1px 0 rgba(0,0,0,.18)"></div><div style="position:absolute;left:0;top:0;width:100%;height:100%;border-radius:6px;box-shadow:inset 0 0 0 1.2px #d6d6d6;z-index:5"></div></div>
<div class="t" style="top:206.76px;font-size:18px;line-height:18px;color:#e6e6e6;left:855px;text-shadow:0 1px 1px rgba(0,0,0,.55);">Principled BSDF</div>
<div class="t" style="top:244.86px;font-size:18px;line-height:18px;color:#e6e6e6;left:578.1px;width:600px;text-align:right;letter-spacing:-1.2px;">BSDF</div>
<div class="t" style="top:278.66px;font-size:18px;line-height:18px;color:#e6e6e6;left:834px;">Base Color</div>
<div style="left:835px;top:307.8px;width:345px;height:28.8px;background:#545454;border-radius:5.5px;"></div>
<div class="t" style="top:312.66px;font-size:18px;line-height:18px;color:#e6e6e6;left:859px;text-shadow:0 1px 1px rgba(0,0,0,.55);">Metallic</div>
<div class="t" style="top:312.66px;font-size:18px;line-height:18px;color:#e6e6e6;left:559.75px;width:600px;text-align:right;text-shadow:0 1px 1px rgba(0,0,0,.55);letter-spacing:0.75px;">0.000</div>
<div style="left:835px;top:342.2px;width:345px;height:28.8px;background:#4772b3;border-radius:5.5px;"></div>
<div class="t" style="top:347.06px;font-size:18px;line-height:18px;color:#e6e6e6;left:859px;text-shadow:0 1px 1px rgba(0,0,0,.55);">Roughness</div>
<div class="t" style="top:347.06px;font-size:18px;line-height:18px;color:#e6e6e6;left:559.75px;width:600px;text-align:right;text-shadow:0 1px 1px rgba(0,0,0,.55);letter-spacing:0.75px;">1.000</div>
<div style="left:835px;top:376.6px;width:345px;height:28.8px;background:#545454;border-radius:5.5px;"></div>
<div class="t" style="top:381.46px;font-size:18px;line-height:18px;color:#e6e6e6;left:859px;text-shadow:0 1px 1px rgba(0,0,0,.55);">IOR</div>
<div class="t" style="top:381.46px;font-size:18px;line-height:18px;color:#e6e6e6;left:559.75px;width:600px;text-align:right;text-shadow:0 1px 1px rgba(0,0,0,.55);letter-spacing:0.75px;">1.350</div>
<div style="left:835px;top:411.2px;width:345px;height:28.8px;background:#4772b3;border-radius:5.5px;"></div>
<div class="t" style="top:416.06px;font-size:18px;line-height:18px;color:#e6e6e6;left:859px;text-shadow:0 1px 1px rgba(0,0,0,.55);">Alpha</div>
<div class="t" style="top:416.06px;font-size:18px;line-height:18px;color:#e6e6e6;left:559.75px;width:600px;text-align:right;text-shadow:0 1px 1px rgba(0,0,0,.55);letter-spacing:0.75px;">1.000</div>
<div class="t" style="top:449.36px;font-size:18px;line-height:18px;color:#e6e6e6;left:835.5px;">Normal</div>
<div class="t" style="top:480.06px;font-size:18px;line-height:18px;color:#e6e6e6;left:856.4px;">Subsurface</div>
<div class="t" style="top:510.76px;font-size:18px;line-height:18px;color:#e6e6e6;left:856.4px;">Specular</div>
<div class="t" style="top:541.36px;font-size:18px;line-height:18px;color:#e6e6e6;left:856.4px;">Transmission</div>
<div class="t" style="top:571.76px;font-size:18px;line-height:18px;color:#e6e6e6;left:856.4px;">Coat</div>
<div class="t" style="top:602.76px;font-size:18px;line-height:18px;color:#e6e6e6;left:856.4px;">Sheen</div>
<div class="t" style="top:633.26px;font-size:18px;line-height:18px;color:#e6e6e6;left:856.4px;">Emission</div>
<div style="left:818.5px;top:659px;width:377px;height:77px;background:#282828;"></div>
<div class="t" style="top:672.86px;font-size:18px;line-height:18px;color:#e6e6e6;left:834px;">Color</div>
<div style="left:834.5px;top:700.8px;width:345.5px;height:29.5px;background:#545454;border-radius:5.5px;"></div>
<div class="t" style="top:705.76px;font-size:18px;line-height:18px;color:#e6e6e6;left:859.5px;text-shadow:0 1px 1px rgba(0,0,0,.55);">Strength</div>
<div class="t" style="top:705.76px;font-size:18px;line-height:18px;color:#e6e6e6;left:559.75px;width:600px;text-align:right;text-shadow:0 1px 1px rgba(0,0,0,.55);letter-spacing:0.75px;">1.000</div>
<div class="t" style="top:742.76px;font-size:18px;line-height:18px;color:#e6e6e6;left:857.7px;">Thin Film</div>
<div style="left:1274px;top:200.9px;width:220px;height:215.9px;background:#303030;border-radius:6px;overflow:hidden;box-shadow:0 1px 10px 3px rgba(0,0,0,.55);"><div style="position:absolute;left:0;top:0;width:100%;height:31.8px;background:#3c1d26;box-shadow:0 1px 0 rgba(0,0,0,.18)"></div></div>
<div class="t" style="top:206.76px;font-size:18px;line-height:18px;color:#e6e6e6;left:1311.8px;text-shadow:0 1px 1px rgba(0,0,0,.55);letter-spacing:0.15px;">Material Output</div>
<div style="left:1289.5px;top:243.3px;width:189px;height:29.2px;background:#282828;border-radius:6px;box-shadow:inset 0 0 0 1px #3a3a3a;"></div>
<div class="t" style="top:249.06px;font-size:18px;line-height:18px;color:#e6e6e6;left:1301.3px;">All</div>
<div class="t" style="top:282.76px;font-size:18px;line-height:18px;color:#e6e6e6;left:1290.2px;">Surface</div>
<div class="t" style="top:316.56px;font-size:18px;line-height:18px;color:#e6e6e6;left:1290.2px;">Volume</div>
<div class="t" style="top:350.76px;font-size:18px;line-height:18px;color:#e6e6e6;left:1290.2px;">Displacement</div>
<div class="t" style="top:384.96px;font-size:18px;line-height:18px;color:#e6e6e6;left:1290.2px;">Thickness</div>
<div style="left:1739px;top:-20px;width:416px;height:90.8px;background:#3d3d3d;border-radius:7px;"></div>
<div style="left:1754px;top:-20px;width:338px;height:76px;background:#2c2c2c;border-radius:7px;box-shadow:0 1px 0 #353535;"></div>
<div style="left:2108px;top:1.3px;width:32.2px;height:31.7px;background:#282828;border-radius:7px;box-shadow:0 1px 0 #353535;"></div>
<div style="left:1739px;top:74px;width:416px;height:246.8px;background:#3d3d3d;border-radius:7px;"></div>
<div class="t" style="top:86.07px;font-size:20px;line-height:20px;color:#e6e6e6;left:1776.3px;">Shape Keys</div>
<div style="left:1754px;top:131px;width:338px;height:133px;background:#2c2c2c;border-radius:7px;box-shadow:0 1px 0 #353535;"></div>
<div style="left:2108px;top:131px;width:32.2px;height:66px;background:#545454;border-radius:7px;"></div>
<div style="left:2108px;top:163.5px;width:32.2px;height:1px;background:#3d3d3d;"></div>
<div style="left:2108px;top:164.5px;width:32.2px;height:32.5px;background:#4a4a4a;border-radius:0 0 7px 7px;"></div>
<div style="left:2108px;top:209.3px;width:32.2px;height:31.7px;background:#282828;border-radius:7px;box-shadow:0 1px 0 #353535;"></div>
<div style="left:1754px;top:278.5px;width:22.3px;height:22.5px;background:#545454;border-radius:4px;"></div>
<div class="t" style="top:280.07px;font-size:20px;line-height:20px;color:#e6e6e6;left:1783px;letter-spacing:-0.27px;">Add Rest Position</div>
<div style="left:1739px;top:323.8px;width:416px;height:41.8px;background:#3d3d3d;border-radius:7px;"></div>
<div class="t" style="top:335.07px;font-size:20px;line-height:20px;color:#e6e6e6;left:1775.2px;">UV Maps</div>
<div style="left:1739px;top:368.8px;width:416px;height:204.6px;background:#3d3d3d;border-radius:7px;"></div>
<div class="t" style="top:381.07px;font-size:20px;line-height:20px;color:#e6e6e6;left:1776px;">Color Attributes</div>
<div style="left:1754px;top:426px;width:338px;height:132.7px;background:#2c2c2c;border-radius:7px;box-shadow:0 1px 0 #353535;"></div>
<div style="left:1762.4px;top:434px;width:321.3px;height:32px;background:#4772b3;border-radius:6px;"></div>
<div class="t" style="top:440.27px;font-size:20px;line-height:20px;color:#ffffff;left:1806.5px;">Attribute</div>
<div class="t" style="top:440.27px;font-size:20px;line-height:20px;color:#a9b4c4;left:1910.6px;text-shadow:0 1px 1px rgba(0,0,0,.55);">Face Corner...</div>
<div style="left:2108px;top:426.4px;width:32.2px;height:66.1px;background:#545454;border-radius:7px;"></div>
<div style="left:2108px;top:458.95px;width:32.2px;height:1px;background:#3d3d3d;"></div>
<div style="left:2108px;top:504.2px;width:32.2px;height:31.7px;background:#282828;border-radius:7px;box-shadow:0 1px 0 #353535;"></div>
<div style="left:1739px;top:576.8px;width:416px;height:205.5px;background:#3d3d3d;border-radius:7px;"></div>
<div class="t" style="top:589.67px;font-size:20px;line-height:20px;color:#e6e6e6;left:1776.5px;">Attributes</div>
<div style="left:1754px;top:634px;width:338px;height:132.8px;background:#2c2c2c;border-radius:7px;box-shadow:0 1px 0 #353535;"></div>
<div style="left:1761.7px;top:641.9px;width:322.7px;height:32px;background:#4772b3;border-radius:6px;"></div>
<div class="t" style="top:647.67px;font-size:20px;line-height:20px;color:#a9b4c4;left:1762px;text-shadow:0 1px 1px rgba(0,0,0,.55);">position</div>
<div class="t" style="top:647.67px;font-size:20px;line-height:20px;color:#a9b4c4;left:1484.2px;width:600px;text-align:right;text-shadow:0 1px 1px rgba(0,0,0,.55);">Vector</div>
<div class="t" style="top:647.67px;font-size:20px;line-height:20px;color:#a9b4c4;left:1398.3px;width:600px;text-align:right;text-shadow:0 1px 1px rgba(0,0,0,.55);">Vertex</div>
<div class="t" style="top:681.67px;font-size:20px;line-height:20px;color:#e6e6e6;left:1762px;">sharp_face</div>
<div class="t" style="top:681.67px;font-size:20px;line-height:20px;color:#8f8f8f;left:1484.2px;width:600px;text-align:right;">Boolean</div>
<div class="t" style="top:681.67px;font-size:20px;line-height:20px;color:#8f8f8f;left:1383.7px;width:600px;text-align:right;">Face</div>
<div class="t" style="top:715.77px;font-size:20px;line-height:20px;color:#e6e6e6;left:1762px;">Attribute</div>
<div class="t" style="top:715.77px;font-size:20px;line-height:20px;color:#8f8f8f;left:1484.2px;width:600px;text-align:right;">...</div>
<div class="t" style="top:715.77px;font-size:20px;line-height:20px;color:#8f8f8f;left:1441.7px;width:600px;text-align:right;">Face Corner</div>
<div style="left:2108px;top:634.5px;width:32.2px;height:65.5px;background:#545454;border-radius:7px;"></div>
<div style="left:2108px;top:666.75px;width:32.2px;height:1px;background:#3d3d3d;"></div>
<div style="left:2108px;top:712.5px;width:32.2px;height:31.7px;background:#282828;border-radius:7px;box-shadow:0 1px 0 #353535;"></div>
<div style="left:1739px;top:785.4px;width:416px;height:74.6px;background:#3d3d3d;border-radius:7px;"></div>
<div class="t" style="top:796.87px;font-size:20px;line-height:20px;color:#e6e6e6;left:1777px;">Texture Space</div>
<svg width="2156" height="826" viewBox="0 0 2156 826"><circle cx="33.9" cy="24.9" r="11.3" fill="none" stroke="#e6e6e6" stroke-width="1.6"/>
<circle cx="34" cy="18" r="2.1" fill="#e6e6e6"/>
<line x1="29" y1="19.9" x2="27" y2="23.6" stroke="#e6e6e6" stroke-width="3" stroke-linecap="round"/>
<path d="M50.25 23.75 L55.5 29.25 L60.75 23.75" fill="none" stroke="#e6e6e6" stroke-width="1.5" stroke-linecap="butt" stroke-linejoin="miter"/>
<path d="M84.7 20.5 V13.7 H91.5 M100.5 13.7 H107.3 V20.5 M107.3 29.5 V36.3 H100.5 M91.5 36.3 H84.7 V29.5" fill="none" stroke="#9a9a9a" stroke-width="1.6"/>
<rect x="88.3" y="17.3" width="15.2" height="15.2" fill="#e6e6e6" stroke="#1a1a1a" stroke-width="1"/>
<path d="M213.25 23.75 L218.5 29.25 L223.75 23.75" fill="none" stroke="#e6e6e6" stroke-width="1.5" stroke-linecap="butt" stroke-linejoin="miter"/>
<path d="M539.6 25.4 L544.5 29.7 L553 19.3" fill="none" stroke="#ffffff" stroke-width="2.6"/>
<path d="M834.25 23.75 L839.5 29.25 L844.75 23.75" fill="none" stroke="#e6e6e6" stroke-width="1.5" stroke-linecap="butt" stroke-linejoin="miter"/>
<line x1="912.8" y1="9" x2="912.8" y2="41" stroke="#3d3d3d" stroke-width="1"/>
<path d="M879.8 28 L879.8 13.7 A11.3 11.3 0 0 0 868.5 25 Q874.15 28.1 879.8 28 Z" fill="#e6e6e6"/>
<path d="M879.8 28 L879.8 36.3 A11.3 11.3 0 0 0 891.1 24.6 Q885.45 27.9 879.8 28 Z" fill="#e6e6e6"/>
<circle cx="879.8" cy="25" r="11.3" fill="none" stroke="#e6e6e6" stroke-width="1.6"/>
<path d="M896.25 23.75 L901.5 29.25 L906.75 23.75" fill="none" stroke="#e6e6e6" stroke-width="1.5" stroke-linecap="butt" stroke-linejoin="miter"/>
<path d="M1104.5 13.3 C1100.5 16.5 1097 17 1093.8 17 V25 C1093.8 30.5 1098 34 1104.5 36.6 C1111 34 1115.2 30.5 1115.2 25 V17 C1112 17 1108.5 16.5 1104.5 13.3 Z" fill="none" stroke="#a9a9a9" stroke-width="1.4"/>
<path d="M1132.4 18.9 H1128.2 V36 H1145.9 V32.3" fill="none" stroke="#e6e6e6" stroke-width="1.5"/>
<path d="M1146 14.2 H1135.6 V29.2 H1150.7 V20.3" fill="none" stroke="#e6e6e6" stroke-width="1.5"/>
<path d="M1146.5 13.5 L1151.5 18.6 V19.6 H1146.5 Z" fill="#e6e6e6"/>
<path d="M1166.9 18.4 L1180.3 31.8 M1180.3 18.4 L1166.9 31.8" stroke="#e6e6e6" stroke-width="1.6"/>
<g transform="translate(1204.6 36.2) rotate(45) scale(0.95)" fill="none" stroke="#a3a3a3" stroke-width="1.4" stroke-linejoin="round"><path d="M0 0 V-9.5"/><path d="M-8 -12.3 H8 L3.6 -16.8 V-22.6 L4.4 -23.2 V-28.6 H-4.4 V-23.2 L-3.6 -22.6 V-16.8 Z"/></g>
<path d="M1514.8 20.8 L1520.4 15.2 L1526 20.8 M1520.4 15.5 V30 Q1520.4 34.3 1524.7 34.3 H1533" fill="none" stroke="#6f6f6f" stroke-width="1.5"/>
<path d="M1553.1 22.2 L1559.3 16.0 A10.3 10.3 0 0 1 1573.9 30.6 L1567.7 36.8 L1563.6 32.8 L1569.85 26.55 A4.6 4.6 0 0 0 1563.35 20.05 L1557.1 26.3 Z" fill="none" stroke="#a9a9a9" stroke-width="1.3" stroke-linejoin="miter"/>
<rect x="1591.6" y="14.6" width="8.3" height="8.3" fill="#e6e6e6"/>
<path d="M1608 13 V36.8 M1595.8 25.3 V36.8 M1602.2 18.9 H1613.9 M1590 31 H1613.9" stroke="#a0a0a0" stroke-width="1.6"/>
<path d="M1619.25 23.75 L1624.5 29.25 L1629.75 23.75" fill="none" stroke="#e6e6e6" stroke-width="1.5" stroke-linecap="butt" stroke-linejoin="miter"/>
<circle cx="1664.5" cy="21.4" r="8.6" fill="#ffffff"/>
<path d="M1653.6 21.3 A8 8 0 1 0 1664.8 32.6" fill="none" stroke="#ffffff" stroke-width="1.5"/>
<path d="M1656 21 H1658.5 M1661 22.3 L1664 25.2 M1665 27.5 V30" fill="none" stroke="#4772b3" stroke-width="1.3"/>
<path d="M1688.75 23.75 L1694 29.25 L1699.25 23.75" fill="none" stroke="#e6e6e6" stroke-width="1.5" stroke-linecap="butt" stroke-linejoin="miter"/>
<path d="M2.8 78.3 L7.8 83.3 L2.8 88.3" fill="none" stroke="#9a9a9a" stroke-width="1.4"/>
<path d="M34 79.5 V72.8 H40.8 M49.8 72.8 H56.6 V79.5 M56.6 88.5 V95.3 H49.8 M40.8 95.3 H34 V88.5" fill="none" stroke="#9a9a9a" stroke-width="1.6"/>
<rect x="37.6" y="76.4" width="15.2" height="15.2" fill="#e6e6e6" stroke="#1a1a1a" stroke-width="1"/>
<path d="M172.5 77.75 L180.5 85 L172.5 92.25" fill="none" stroke="#e6e6e6" stroke-width="1.5"/>
<path d="M203.9 75.2 H215.2 M202.2 78.6 L207.8 89.4 M216.8 78.6 L211.2 89.4" stroke="#e6e6e6" stroke-width="1.5"/>
<rect x="197.7" y="72.4" width="5.6" height="5.6" fill="#111" stroke="#e6e6e6" stroke-width="1.6"/>
<rect x="215.7" y="72.4" width="5.6" height="5.6" fill="#111" stroke="#e6e6e6" stroke-width="1.6"/>
<rect x="206.7" y="89.8" width="5.6" height="5.6" fill="#111" stroke="#e6e6e6" stroke-width="1.6"/>
<path d="M336.4 77.75 L344.4 85 L336.4 92.25" fill="none" stroke="#e6e6e6" stroke-width="1.5"/>
<path d="M373.6 87 L373.6 72.7 A11.3 11.3 0 0 0 362.3 84 Q367.95 87.1 373.6 87 Z" fill="#e6e6e6"/>
<path d="M373.6 87 L373.6 95.3 A11.3 11.3 0 0 0 384.9 83.6 Q379.25 86.9 373.6 87 Z" fill="#e6e6e6"/>
<circle cx="373.6" cy="84" r="11.3" fill="none" stroke="#e6e6e6" stroke-width="1.6"/>
<path d="M1721.45 76.55 L1714.95 82.8 L1721.45 89.05" fill="none" stroke="#8c8c8c" stroke-width="2.1"/>
<path d="M219.3 282.5 L225.8 289.5 L232.3 282.5" fill="none" stroke="#e6e6e6" stroke-width="1.5" stroke-linecap="butt" stroke-linejoin="miter"/>
<circle cx="422" cy="324.3" r="7.5" fill="#c7c729" stroke="#141414" stroke-width="1.3"/>
<circle cx="422" cy="357.7" r="7.5" fill="#6363c7" stroke="#141414" stroke-width="1.3"/>
<circle cx="422" cy="392" r="7.5" fill="#a1a1a1" stroke="#141414" stroke-width="1.3"/>
<circle cx="422" cy="426.3" r="7.5" fill="#a1a1a1" stroke="#141414" stroke-width="1.3"/>
<path d="M392.25 466.5 L397 471.5 L401.75 466.5" fill="none" stroke="#e6e6e6" stroke-width="1.4" stroke-linecap="butt" stroke-linejoin="miter"/>
<path d="M834.5 212.5 L841 219.5 L847.5 212.5" fill="none" stroke="#e6e6e6" stroke-width="1.5" stroke-linecap="butt" stroke-linejoin="miter"/>
<circle cx="1196" cy="253.7" r="7.5" fill="#63c763" stroke="#141414" stroke-width="1.3"/>
<circle cx="818" cy="288.4" r="7.5" fill="#c7c729" stroke="#141414" stroke-width="1.3"/>
<circle cx="818" cy="322.2" r="7.5" fill="#a1a1a1" stroke="#141414" stroke-width="1.3"/>
<circle cx="818" cy="356.6" r="7.5" fill="#a1a1a1" stroke="#141414" stroke-width="1.3"/>
<circle cx="818" cy="391" r="7.5" fill="#a1a1a1" stroke="#141414" stroke-width="1.3"/>
<circle cx="818" cy="425.6" r="7.5" fill="#a1a1a1" stroke="#141414" stroke-width="1.3"/>
<circle cx="818" cy="459" r="7.5" fill="#6363c7" stroke="#141414" stroke-width="1.3"/>
<path d="M839.8 482.65 L845.8 488.9 L839.8 495.15" fill="none" stroke="#e6e6e6" stroke-width="1.5"/>
<path d="M839.8 513.35 L845.8 519.6 L839.8 525.85" fill="none" stroke="#e6e6e6" stroke-width="1.5"/>
<path d="M839.8 543.95 L845.8 550.2 L839.8 556.45" fill="none" stroke="#e6e6e6" stroke-width="1.5"/>
<path d="M839.8 574.35 L845.8 580.6 L839.8 586.85" fill="none" stroke="#e6e6e6" stroke-width="1.5"/>
<path d="M839.8 605.35 L845.8 611.6 L839.8 617.85" fill="none" stroke="#e6e6e6" stroke-width="1.5"/>
<path d="M834.5 638.8 L841 645.8 L847.5 638.8" fill="none" stroke="#e6e6e6" stroke-width="1.5" stroke-linecap="butt" stroke-linejoin="miter"/>
<circle cx="818" cy="682.1" r="7.5" fill="#c7c729" stroke="#141414" stroke-width="1.3"/>
<circle cx="818" cy="715.3" r="7.5" fill="#a1a1a1" stroke="#141414" stroke-width="1.3"/>
<path d="M839.8 745.35 L845.8 751.6 L839.8 757.85" fill="none" stroke="#e6e6e6" stroke-width="1.5"/>
<path d="M1290.5 212.8 L1297 219.8 L1303.5 212.8" fill="none" stroke="#e6e6e6" stroke-width="1.5" stroke-linecap="butt" stroke-linejoin="miter"/>
<path d="M1464.25 256.7 L1469 261.7 L1473.75 256.7" fill="none" stroke="#e6e6e6" stroke-width="1.4" stroke-linecap="butt" stroke-linejoin="miter"/>
<circle cx="1274" cy="292" r="7.5" fill="#63c763" stroke="#141414" stroke-width="1.3"/>
<circle cx="1274" cy="325.8" r="7.5" fill="#63c763" stroke="#141414" stroke-width="1.3"/>
<circle cx="1274" cy="360" r="7.5" fill="#6363c7" stroke="#141414" stroke-width="1.3"/>
<circle cx="1274" cy="394.2" r="7.5" fill="#a1a1a1" stroke="#141414" stroke-width="1.3"/>
<path d="M1773 34.5 L1783 39.3 L1773 44.1 Z" fill="#b4b4b4"/>
<rect x="1930.7" y="36.6" width="2" height="2" fill="#e0e0e0"/>
<rect x="1935.9" y="36.6" width="2" height="2" fill="#e0e0e0"/>
<rect x="1941.1" y="36.6" width="2" height="2" fill="#e0e0e0"/>
<rect x="1946.3" y="36.6" width="2" height="2" fill="#e0e0e0"/>
<rect x="1930.7" y="41.7" width="2" height="2" fill="#e0e0e0"/>
<rect x="1935.9" y="41.7" width="2" height="2" fill="#e0e0e0"/>
<rect x="1941.1" y="41.7" width="2" height="2" fill="#e0e0e0"/>
<rect x="1946.3" y="41.7" width="2" height="2" fill="#e0e0e0"/>
<path d="M2116.7 14.35 L2123.2 20.85 L2129.7 14.35" fill="none" stroke="#e6e6e6" stroke-width="1.6" stroke-linecap="butt" stroke-linejoin="miter"/>
<path d="M1753.1 93.2 L1760.6 101.2 L1768.1 93.2" fill="none" stroke="#bdbdbd" stroke-width="1.8" stroke-linecap="butt" stroke-linejoin="miter"/>
<rect x="2125" y="92" width="3" height="1.2" fill="#000"/>
<rect x="2125" y="89" width="3" height="3" fill="#ababab"/>
<rect x="2130" y="92" width="3" height="1.2" fill="#000"/>
<rect x="2130" y="89" width="3" height="3" fill="#ababab"/>
<rect x="2135" y="92" width="3" height="1.2" fill="#000"/>
<rect x="2135" y="89" width="3" height="3" fill="#ababab"/>
<rect x="2140" y="92" width="3" height="1.2" fill="#000"/>
<rect x="2140" y="89" width="3" height="3" fill="#ababab"/>
<rect x="2125" y="97" width="3" height="1.2" fill="#000"/>
<rect x="2125" y="94" width="3" height="3" fill="#ababab"/>
<rect x="2130" y="97" width="3" height="1.2" fill="#000"/>
<rect x="2130" y="94" width="3" height="3" fill="#ababab"/>
<rect x="2135" y="97" width="3" height="1.2" fill="#000"/>
<rect x="2135" y="94" width="3" height="3" fill="#ababab"/>
<rect x="2140" y="97" width="3" height="1.2" fill="#000"/>
<rect x="2140" y="94" width="3" height="3" fill="#ababab"/>
<path d="M1773 242.7 L1783 247.5 L1773 252.3 Z" fill="#b4b4b4"/>
<rect x="1930.7" y="244.8" width="2" height="2" fill="#e0e0e0"/>
<rect x="1935.9" y="244.8" width="2" height="2" fill="#e0e0e0"/>
<rect x="1941.1" y="244.8" width="2" height="2" fill="#e0e0e0"/>
<rect x="1946.3" y="244.8" width="2" height="2" fill="#e0e0e0"/>
<rect x="1930.7" y="249.9" width="2" height="2" fill="#e0e0e0"/>
<rect x="1935.9" y="249.9" width="2" height="2" fill="#e0e0e0"/>
<rect x="1941.1" y="249.9" width="2" height="2" fill="#e0e0e0"/>
<rect x="1946.3" y="249.9" width="2" height="2" fill="#e0e0e0"/>
<path d="M2125 138 V154 M2117.1 146 H2132.9" stroke="#e6e6e6" stroke-width="1.9"/>
<path d="M2117.1 179.7 H2132.9" stroke="#7c7c7c" stroke-width="1.9"/>
<path d="M2116.7 222.35 L2123.2 228.85 L2129.7 222.35" fill="none" stroke="#e6e6e6" stroke-width="1.6" stroke-linecap="butt" stroke-linejoin="miter"/>
<path d="M1758.7 338.5 L1765.7 345.5 L1758.7 352.5" fill="none" stroke="#bdbdbd" stroke-width="1.8"/>
<rect x="2125" y="342" width="3" height="1.2" fill="#000"/>
<rect x="2125" y="339" width="3" height="3" fill="#ababab"/>
<rect x="2130" y="342" width="3" height="1.2" fill="#000"/>
<rect x="2130" y="339" width="3" height="3" fill="#ababab"/>
<rect x="2135" y="342" width="3" height="1.2" fill="#000"/>
<rect x="2135" y="339" width="3" height="3" fill="#ababab"/>
<rect x="2140" y="342" width="3" height="1.2" fill="#000"/>
<rect x="2140" y="339" width="3" height="3" fill="#ababab"/>
<rect x="2125" y="347" width="3" height="1.2" fill="#000"/>
<rect x="2125" y="344" width="3" height="3" fill="#ababab"/>
<rect x="2130" y="347" width="3" height="1.2" fill="#000"/>
<rect x="2130" y="344" width="3" height="3" fill="#ababab"/>
<rect x="2135" y="347" width="3" height="1.2" fill="#000"/>
<rect x="2135" y="344" width="3" height="3" fill="#ababab"/>
<rect x="2140" y="347" width="3" height="1.2" fill="#000"/>
<rect x="2140" y="344" width="3" height="3" fill="#ababab"/>
<path d="M1753.1 387.7 L1760.6 395.7 L1768.1 387.7" fill="none" stroke="#bdbdbd" stroke-width="1.8" stroke-linecap="butt" stroke-linejoin="miter"/>
<rect x="2125" y="387" width="3" height="1.2" fill="#000"/>
<rect x="2125" y="384" width="3" height="3" fill="#ababab"/>
<rect x="2130" y="387" width="3" height="1.2" fill="#000"/>
<rect x="2130" y="384" width="3" height="3" fill="#ababab"/>
<rect x="2135" y="387" width="3" height="1.2" fill="#000"/>
<rect x="2135" y="384" width="3" height="3" fill="#ababab"/>
<rect x="2140" y="387" width="3" height="1.2" fill="#000"/>
<rect x="2140" y="384" width="3" height="3" fill="#ababab"/>
<rect x="2125" y="392" width="3" height="1.2" fill="#000"/>
<rect x="2125" y="389" width="3" height="3" fill="#ababab"/>
<rect x="2130" y="392" width="3" height="1.2" fill="#000"/>
<rect x="2130" y="389" width="3" height="3" fill="#ababab"/>
<rect x="2135" y="392" width="3" height="1.2" fill="#000"/>
<rect x="2135" y="389" width="3" height="3" fill="#ababab"/>
<rect x="2140" y="392" width="3" height="1.2" fill="#000"/>
<rect x="2140" y="389" width="3" height="3" fill="#ababab"/>
<rect x="1767" y="438.8" width="5.3" height="5.3" fill="none" stroke="#fff" stroke-width="1.8"/>
<path d="M1766.1 446.4 H1773.1 V458.6 A3.5 3.5 0 0 1 1766.1 458.6 Z" fill="#fff"/>
<circle cx="1769.6" cy="458.6" r="1.6" fill="#4772b3"/>
<rect x="1782.9" y="440.1" width="5.3" height="5.6" fill="none" stroke="#d6e0ef" stroke-width="1.8"/>
<path d="M1775 448.4 L1777.3 446.2 L1781.8 451.2 L1775 457 Z" fill="#cfdcee"/>
<path d="M1775 462 H1782 V455.1 Z" fill="#aec2e0"/>
<rect x="1784.9" y="456" width="5.3" height="5.3" fill="none" stroke="#c2d2e9" stroke-width="1.8"/>
<path d="M2055.8 442.9 H2061.8 L2064.5 439.3 H2071.5 L2074.2 442.9 H2078.6 V459 H2055.8 Z" fill="#ececec"/>
<circle cx="2067.9" cy="450.3" r="6.1" fill="none" stroke="#4772b3" stroke-width="1.7"/>
<circle cx="2067.9" cy="450.3" r="3.5" fill="#4772b3"/>
<path d="M1773 537.9 L1783 542.7 L1773 547.5 Z" fill="#b4b4b4"/>
<rect x="1930.7" y="540" width="2" height="2" fill="#e0e0e0"/>
<rect x="1935.9" y="540" width="2" height="2" fill="#e0e0e0"/>
<rect x="1941.1" y="540" width="2" height="2" fill="#e0e0e0"/>
<rect x="1946.3" y="540" width="2" height="2" fill="#e0e0e0"/>
<rect x="1930.7" y="545.1" width="2" height="2" fill="#e0e0e0"/>
<rect x="1935.9" y="545.1" width="2" height="2" fill="#e0e0e0"/>
<rect x="1941.1" y="545.1" width="2" height="2" fill="#e0e0e0"/>
<rect x="1946.3" y="545.1" width="2" height="2" fill="#e0e0e0"/>
<path d="M2125 433.4 V449.4 M2117.1 441.4 H2132.9" stroke="#e6e6e6" stroke-width="1.9"/>
<path d="M2117.1 475.15 H2132.9" stroke="#e6e6e6" stroke-width="1.9"/>
<path d="M2116.7 517.25 L2123.2 523.75 L2129.7 517.25" fill="none" stroke="#e6e6e6" stroke-width="1.6" stroke-linecap="butt" stroke-linejoin="miter"/>
<path d="M1753 596 L1760.5 604 L1768 596" fill="none" stroke="#bdbdbd" stroke-width="1.8" stroke-linecap="butt" stroke-linejoin="miter"/>
<rect x="2125" y="595" width="3" height="1.2" fill="#000"/>
<rect x="2125" y="592" width="3" height="3" fill="#ababab"/>
<rect x="2130" y="595" width="3" height="1.2" fill="#000"/>
<rect x="2130" y="592" width="3" height="3" fill="#ababab"/>
<rect x="2135" y="595" width="3" height="1.2" fill="#000"/>
<rect x="2135" y="592" width="3" height="3" fill="#ababab"/>
<rect x="2140" y="595" width="3" height="1.2" fill="#000"/>
<rect x="2140" y="592" width="3" height="3" fill="#ababab"/>
<rect x="2125" y="600" width="3" height="1.2" fill="#000"/>
<rect x="2125" y="597" width="3" height="3" fill="#ababab"/>
<rect x="2130" y="600" width="3" height="1.2" fill="#000"/>
<rect x="2130" y="597" width="3" height="3" fill="#ababab"/>
<rect x="2135" y="600" width="3" height="1.2" fill="#000"/>
<rect x="2135" y="597" width="3" height="3" fill="#ababab"/>
<rect x="2140" y="600" width="3" height="1.2" fill="#000"/>
<rect x="2140" y="597" width="3" height="3" fill="#ababab"/>
<path d="M2004.9 650.2 L2021.4 658.4 L2004.9 666.6 Z" fill="#a9b4c4"/>
<path d="M1990.6 684.1 L2006.9 692.1 L1990.6 700.1 Z" fill="#8f8f8f"/>
<path d="M2048.2 717.4 L2064.2 725.7 L2048.2 734 Z" fill="#8f8f8f"/>
<path d="M1773 745.9 L1783 750.7 L1773 755.5 Z" fill="#b4b4b4"/>
<rect x="1930.7" y="748" width="2" height="2" fill="#e0e0e0"/>
<rect x="1935.9" y="748" width="2" height="2" fill="#e0e0e0"/>
<rect x="1941.1" y="748" width="2" height="2" fill="#e0e0e0"/>
<rect x="1946.3" y="748" width="2" height="2" fill="#e0e0e0"/>
<rect x="1930.7" y="753.1" width="2" height="2" fill="#e0e0e0"/>
<rect x="1935.9" y="753.1" width="2" height="2" fill="#e0e0e0"/>
<rect x="1941.1" y="753.1" width="2" height="2" fill="#e0e0e0"/>
<rect x="1946.3" y="753.1" width="2" height="2" fill="#e0e0e0"/>
<path d="M2125 641.5 V657.5 M2117.1 649.5 H2132.9" stroke="#e6e6e6" stroke-width="1.9"/>
<path d="M2117.1 682.95 H2132.9" stroke="#e6e6e6" stroke-width="1.9"/>
<path d="M2116.7 725.55 L2123.2 732.05 L2129.7 725.55" fill="none" stroke="#e6e6e6" stroke-width="1.6" stroke-linecap="butt" stroke-linejoin="miter"/>
<path d="M1758.7 799.5 L1765.7 806.5 L1758.7 813.5" fill="none" stroke="#bdbdbd" stroke-width="1.8"/>
<rect x="2125" y="803" width="3" height="1.2" fill="#000"/>
<rect x="2125" y="800" width="3" height="3" fill="#ababab"/>
<rect x="2130" y="803" width="3" height="1.2" fill="#000"/>
<rect x="2130" y="800" width="3" height="3" fill="#ababab"/>
<rect x="2135" y="803" width="3" height="1.2" fill="#000"/>
<rect x="2135" y="800" width="3" height="3" fill="#ababab"/>
<rect x="2140" y="803" width="3" height="1.2" fill="#000"/>
<rect x="2140" y="800" width="3" height="3" fill="#ababab"/>
<rect x="2125" y="808" width="3" height="1.2" fill="#000"/>
<rect x="2125" y="805" width="3" height="3" fill="#ababab"/>
<rect x="2130" y="808" width="3" height="1.2" fill="#000"/>
<rect x="2130" y="805" width="3" height="3" fill="#ababab"/>
<rect x="2135" y="808" width="3" height="1.2" fill="#000"/>
<rect x="2135" y="805" width="3" height="3" fill="#ababab"/>
<rect x="2140" y="808" width="3" height="1.2" fill="#000"/>
<rect x="2140" y="805" width="3" height="3" fill="#ababab"/></svg>
</body></html>
